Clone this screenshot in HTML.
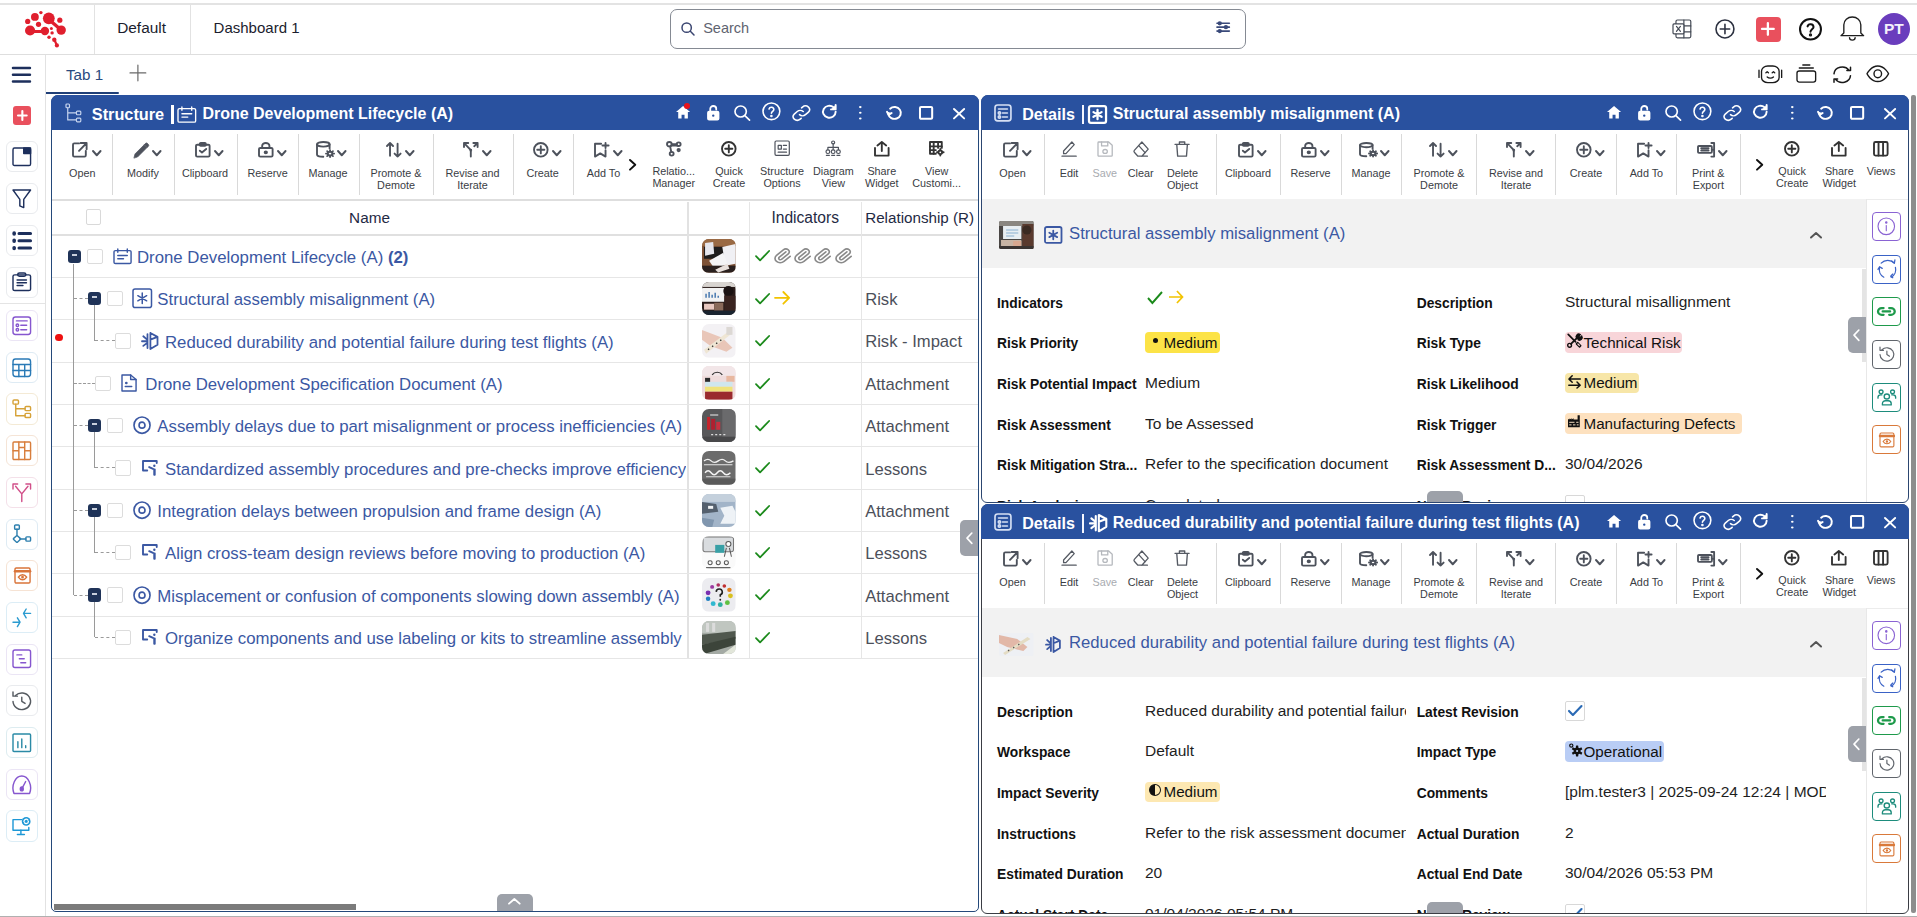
<!DOCTYPE html><html><head><meta charset="utf-8"><style>
html,body{margin:0;padding:0;background:#fff;width:1917px;height:917px;overflow:hidden;position:relative;font-family:"Liberation Sans", sans-serif;}
.t{position:absolute;white-space:nowrap;font-family:"Liberation Sans", sans-serif;}
.r{position:absolute;box-sizing:border-box;}
.ic{position:absolute;overflow:visible;}
.ic *{vector-effect:non-scaling-stroke;}
.clip{position:absolute;overflow:hidden;}
</style></head><body>
<div class="r" style="left:0.00px;top:3.00px;width:1917.00px;height:2.00px;background:#e3e3e3"></div>
<div class="r" style="left:0.00px;top:54.00px;width:1917.00px;height:1.00px;background:#dedede"></div>
<div class="r" style="left:94.00px;top:5.00px;width:1.00px;height:49.00px;background:#e2e2e2"></div>
<div class="r" style="left:190.00px;top:5.00px;width:1.00px;height:49.00px;background:#e2e2e2"></div>
<svg class="ic" style="left:0;top:0;width:80px;height:60px" viewBox="0 0 80 60"><g fill="#e01f2e" stroke="#e01f2e" stroke-linecap="round">
<circle cx="48.8" cy="18.3" r="5.9" stroke="none"/><circle cx="61.2" cy="30.1" r="4.7" stroke="none"/><path d="M49.5 20 L60 29" stroke-width="3.4"/>
<circle cx="59.8" cy="20.2" r="2.6" stroke="none"/><circle cx="34.9" cy="16.9" r="3.9" stroke="none"/><circle cx="27.7" cy="21.4" r="2.6" stroke="none"/>
<circle cx="40.9" cy="12.6" r="1.7" stroke="none"/><circle cx="38.5" cy="24.3" r="2.6" stroke="none"/>
<circle cx="30.1" cy="30.5" r="5.1" stroke="none"/><circle cx="44.9" cy="31" r="4.2" stroke="none"/><path d="M31 31.4 L44 31.4" stroke-width="3.0"/>
<circle cx="51.4" cy="28.4" r="1.5" stroke="none"/><circle cx="52.1" cy="32.9" r="1.7" stroke="none"/><circle cx="49" cy="37.3" r="1.7" stroke="none"/>
<circle cx="54.3" cy="39.7" r="2.2" stroke="none"/><circle cx="56.9" cy="45.4" r="2.1" stroke="none"/><path d="M54.5 40 L56.7 45" stroke-width="2.2"/>
</g></svg>
<div class="t" style="left:117.20px;top:20.16px;font-size:15.4px;line-height:15.4px;font-weight:400;color:#1b1d2e;">Default</div>
<div class="t" style="left:213.60px;top:19.80px;font-size:15.0px;line-height:15.0px;font-weight:400;color:#1b1d2e;">Dashboard 1</div>
<div class="r" style="left:670.00px;top:9.00px;width:576.00px;height:40.00px;border:1.5px solid #858a93;border-radius:7px"></div>
<svg class="ic" style="left:681.75px;top:22.75px;width:12.00px;height:12.00px;color:#3a4570;" viewBox="3.000 3.000 18.000 18.000" fill="none" stroke="currentColor" stroke-width="1.50" stroke-linecap="round" stroke-linejoin="round" preserveAspectRatio="none" ><circle cx="10" cy="10" r="7"/><path d="M15.5 15.5L21 21"/></svg>
<div class="t" style="left:703.20px;top:21.43px;font-size:14.5px;line-height:14.5px;font-weight:400;color:#5f6470;">Search</div>
<svg class="ic" style="left:1217.33px;top:22.32px;width:12.35px;height:10.35px;color:#3a4a7a;" viewBox="3.000 4.000 18.000 16.000" fill="none" stroke="currentColor" stroke-width="1.65" stroke-linecap="round" stroke-linejoin="round" preserveAspectRatio="none" ><path d="M3 6h18M3 12h18M3 18h18"/><circle cx="7" cy="6" r="2" fill="currentColor"/><circle cx="16" cy="12" r="2" fill="currentColor"/><circle cx="7" cy="18" r="2" fill="currentColor"/></svg>
<svg class="ic" style="left:1672.60px;top:20.10px;width:17.80px;height:17.80px;color:#444a55;" viewBox="3.000 3.000 18.000 18.000" fill="none" stroke="currentColor" stroke-width="1.20" stroke-linecap="round" stroke-linejoin="round" preserveAspectRatio="none" ><rect x="6" y="3" width="15" height="18" rx="1.5"/><path d="M14 3v18M14 9h7M14 15h7"/><rect x="3" y="7" width="11" height="10" rx="1" fill="#fff"/><path d="M6.5 9.5l4 5M10.5 9.5l-4 5"/></svg>
<svg class="ic" style="left:1716.29px;top:20.29px;width:17.93px;height:17.93px;color:#2c3140;" viewBox="2.500 2.500 19.000 19.000" fill="none" stroke="currentColor" stroke-width="1.58" stroke-linecap="round" stroke-linejoin="round" preserveAspectRatio="none" ><circle cx="12" cy="12" r="9.5"/><path d="M12 7v10M7 12h10"/></svg>
<div class="r" style="left:1756.00px;top:17.00px;width:24.50px;height:24.50px;background:#e9505d;border-radius:4px"></div>
<svg class="ic" style="left:1762.42px;top:23.43px;width:11.75px;height:11.75px;color:#fff;" viewBox="4.000 4.000 16.000 16.000" fill="none" stroke="currentColor" stroke-width="2.25" stroke-linecap="round" stroke-linejoin="round" preserveAspectRatio="none" ><path d="M12 4v16M4 12h16"/></svg>
<svg class="ic" style="left:1799.51px;top:18.51px;width:20.98px;height:20.48px;color:#111;" viewBox="2.000 2.000 20.000 20.000" fill="none" stroke="currentColor" stroke-width="2.03" stroke-linecap="round" stroke-linejoin="round" preserveAspectRatio="none" ><circle cx="12" cy="12" r="10"/><path d="M9.2 9.2a2.9 2.9 0 0 1 5.7.6c0 2-2.9 2.4-2.9 4.6"/><circle cx="12" cy="17.6" r="0.6" fill="currentColor"/></svg>
<svg class="ic" style="left:1840.67px;top:17.18px;width:22.65px;height:23.15px;color:#1e1e1e;" viewBox="4.000 4.500 16.000 18.000" fill="none" stroke="currentColor" stroke-width="1.35" stroke-linecap="round" stroke-linejoin="round" preserveAspectRatio="none" ><path d="M6 17V10.5a6 6 0 0 1 12 0V17l2 2H4z"/><path d="M10 20.5a2 2 0 0 0 4 0"/></svg>
<div class="r" style="left:1877.5px;top:12.8px;width:32px;height:32px;border-radius:50%;background:#6a3dbd"></div>
<div class="t" style="left:1743.80px;width:300px;text-align:center;top:21.08px;font-size:15.5px;line-height:15.5px;font-weight:700;color:#f4f0fb;">PT</div>
<div class="r" style="left:45.00px;top:55.00px;width:1.00px;height:862.00px;background:#e2e2e2"></div>
<svg class="ic" style="left:12.78px;top:68.28px;width:16.95px;height:13.45px;color:#1d2f5c;" viewBox="3.000 6.000 18.000 12.000" fill="none" stroke="currentColor" stroke-width="2.55" stroke-linecap="round" stroke-linejoin="round" preserveAspectRatio="none" ><path d="M3 6h18M3 12h18M3 18h18"/></svg>
<div class="r" style="left:12.80px;top:106.00px;width:18.60px;height:18.50px;background:#e9505d;border-radius:3px"></div>
<svg class="ic" style="left:17.85px;top:110.85px;width:8.70px;height:8.90px;color:#fff;" viewBox="4.000 4.000 16.000 16.000" fill="none" stroke="currentColor" stroke-width="2.10" stroke-linecap="round" stroke-linejoin="round" preserveAspectRatio="none" ><path d="M12 4v16M4 12h16"/></svg>
<div class="r" style="left:6.30px;top:141.00px;width:31.40px;height:31.20px;border:1px solid #e9ebee;border-radius:6px"></div>
<svg class="ic" style="left:13.41px;top:147.81px;width:17.57px;height:17.57px;color:#1d2f5c;" viewBox="3.000 4.000 18.000 16.000" fill="none" stroke="currentColor" stroke-width="1.42" stroke-linecap="round" stroke-linejoin="round" preserveAspectRatio="none" ><rect x="3" y="4" width="18" height="16" rx="1.5"/><rect x="14" y="4" width="7" height="5" fill="currentColor"/></svg>
<div class="r" style="left:6.30px;top:183.00px;width:31.40px;height:31.20px;border:1px solid #e9ebee;border-radius:6px"></div>
<svg class="ic" style="left:13.41px;top:189.81px;width:17.57px;height:17.57px;color:#1d2f5c;" viewBox="3.000 4.000 18.000 16.000" fill="none" stroke="currentColor" stroke-width="1.42" stroke-linecap="round" stroke-linejoin="round" preserveAspectRatio="none" ><path d="M3 4h18l-7 8.5V20l-4-1.5v-6z"/></svg>
<div class="r" style="left:6.30px;top:225.00px;width:31.40px;height:31.20px;border:1px solid #e9ebee;border-radius:6px"></div>
<svg class="ic" style="left:13.41px;top:231.81px;width:17.57px;height:17.57px;color:#1d2f5c;" viewBox="2.800 4.800 18.200 14.400" fill="none" stroke="currentColor" stroke-width="1.42" stroke-linecap="round" stroke-linejoin="round" preserveAspectRatio="none" ><path d="M9 6h12M9 12h12M9 18h12" stroke-width="3"/><circle cx="4" cy="6" r="1.2" fill="currentColor"/><circle cx="4" cy="12" r="1.2" fill="currentColor"/><circle cx="4" cy="18" r="1.2" fill="currentColor"/></svg>
<div class="r" style="left:6.30px;top:266.50px;width:31.40px;height:31.20px;border:1px solid #e9ebee;border-radius:6px"></div>
<svg class="ic" style="left:13.41px;top:273.31px;width:17.57px;height:17.57px;color:#1d2f5c;" viewBox="4.500 2.500 15.000 19.000" fill="none" stroke="currentColor" stroke-width="1.42" stroke-linecap="round" stroke-linejoin="round" preserveAspectRatio="none" ><rect x="4.5" y="4.5" width="15" height="17" rx="1.5"/><rect x="8.5" y="2.5" width="7" height="3.5" rx="1.5"/><path d="M8 10h8M8 13h8M8 16h5"/></svg>
<div class="r" style="left:6.30px;top:310.00px;width:31.40px;height:31.20px;border:1px solid #ebe5f5;border-radius:6px"></div>
<svg class="ic" style="left:13.41px;top:316.81px;width:17.57px;height:17.57px;color:#8656cf;" viewBox="3.000 3.000 18.000 18.000" fill="none" stroke="currentColor" stroke-width="1.42" stroke-linecap="round" stroke-linejoin="round" preserveAspectRatio="none" ><rect x="3" y="3" width="18" height="18" rx="2.5"/><path d="M6.5 7h11"/><circle cx="7.5" cy="11.5" r="1.3"/><circle cx="7.5" cy="16" r="1.3"/><path d="M11 11.5h6M11 16h6"/></svg>
<div class="r" style="left:6.30px;top:351.70px;width:31.40px;height:31.20px;border:1px solid #deebf4;border-radius:6px"></div>
<svg class="ic" style="left:13.41px;top:358.51px;width:17.57px;height:17.57px;color:#2a7ab6;" viewBox="3.000 4.000 18.000 16.000" fill="none" stroke="currentColor" stroke-width="1.42" stroke-linecap="round" stroke-linejoin="round" preserveAspectRatio="none" ><rect x="3" y="4" width="18" height="16" rx="2.5"/><path d="M3 9h18M3 14.5h18M9 9v11M15 9v11" /></svg>
<div class="r" style="left:6.30px;top:393.40px;width:31.40px;height:31.20px;border:1px solid #f4ead5;border-radius:6px"></div>
<svg class="ic" style="left:13.41px;top:400.21px;width:17.57px;height:17.57px;color:#d6a238;" viewBox="4.000 2.500 16.000 19.000" fill="none" stroke="currentColor" stroke-width="1.42" stroke-linecap="round" stroke-linejoin="round" preserveAspectRatio="none" ><rect x="4" y="2.5" width="5" height="4.5" rx="1"/><rect x="15" y="9.5" width="5" height="4.5" rx="1"/><rect x="15" y="17" width="5" height="4.5" rx="1"/><path d="M6.5 7V19.5H15M6.5 12H15"/></svg>
<div class="r" style="left:6.30px;top:435.10px;width:31.40px;height:31.20px;border:1px solid #f5e4d6;border-radius:6px"></div>
<svg class="ic" style="left:13.41px;top:441.91px;width:17.57px;height:17.57px;color:#d87e3c;" viewBox="3.000 4.000 18.000 16.000" fill="none" stroke="currentColor" stroke-width="1.42" stroke-linecap="round" stroke-linejoin="round" preserveAspectRatio="none" ><rect x="3" y="4" width="18" height="16" rx="1"/><path d="M9 4v16M15 4v16M3 12h6M15 12h6M9 9h6"/></svg>
<div class="r" style="left:6.30px;top:476.80px;width:31.40px;height:31.20px;border:1px solid #f4e0e9;border-radius:6px"></div>
<svg class="ic" style="left:13.41px;top:483.61px;width:17.57px;height:17.57px;color:#d14f89;" viewBox="3.500 5.000 17.000 16.000" fill="none" stroke="currentColor" stroke-width="1.42" stroke-linecap="round" stroke-linejoin="round" preserveAspectRatio="none" ><path d="M12 21V14L6 7M12 14l6-7M3.5 9.5V5h4.5M20.5 9.5V5H16"/></svg>
<div class="r" style="left:6.30px;top:518.50px;width:31.40px;height:31.20px;border:1px solid #deebf4;border-radius:6px"></div>
<svg class="ic" style="left:13.41px;top:525.31px;width:17.57px;height:17.57px;color:#2d7fae;" viewBox="2.257 2.500 18.743 20.743" fill="none" stroke="currentColor" stroke-width="1.42" stroke-linecap="round" stroke-linejoin="round" preserveAspectRatio="none" ><rect x="4" y="2.5" width="5" height="5" rx="1"/><rect x="16" y="16.5" width="5" height="5" rx="1"/><path d="M6.5 7.5v7.5M9.5 19h6.5"/><rect x="3.5" y="16" width="6" height="6" rx="1" transform="rotate(45 6.5 19)"/></svg>
<div class="r" style="left:6.30px;top:560.20px;width:31.40px;height:31.20px;border:1px solid #f6e3d4;border-radius:6px"></div>
<svg class="ic" style="left:14.66px;top:568.26px;width:15.07px;height:15.07px;color:#d9743a;" viewBox="3.000 3.000 18.000 18.000" fill="none" stroke="currentColor" stroke-width="1.42" stroke-linecap="round" stroke-linejoin="round" preserveAspectRatio="none" ><rect x="3" y="3" width="18" height="18" rx="1.5"/><path d="M3 7h18" stroke-width="2.5"/><path d="M7 14s2-3 5-3s5 3 5 3s-2 3-5 3s-5-3-5-3z"/><circle cx="12" cy="14" r="0.8" fill="currentColor"/></svg>
<div class="r" style="left:6.30px;top:601.90px;width:31.40px;height:31.20px;border:1px solid #dcedf6;border-radius:6px"></div>
<svg class="ic" style="left:13.41px;top:608.71px;width:17.57px;height:17.57px;color:#2b9bd0;" viewBox="2.000 6.000 20.000 12.000" fill="none" stroke="currentColor" stroke-width="1.42" stroke-linecap="round" stroke-linejoin="round" preserveAspectRatio="none" ><path d="M2 15h8M7 12l3 3l-3 3"/><path d="M22 9h-8M17 6l-3 3l3 3"/></svg>
<div class="r" style="left:6.30px;top:643.60px;width:31.40px;height:31.20px;border:1px solid #ebe5f5;border-radius:6px"></div>
<svg class="ic" style="left:13.41px;top:650.41px;width:17.57px;height:17.57px;color:#8656cf;" viewBox="3.000 3.000 18.000 18.000" fill="none" stroke="currentColor" stroke-width="1.42" stroke-linecap="round" stroke-linejoin="round" preserveAspectRatio="none" ><rect x="3" y="3" width="18" height="18" rx="2"/><path d="M7 8h5M9.5 12h5M11 16h5"/></svg>
<div class="r" style="left:6.30px;top:685.30px;width:31.40px;height:31.20px;border:1px solid #e9ebee;border-radius:6px"></div>
<svg class="ic" style="left:13.41px;top:692.11px;width:17.57px;height:17.57px;color:#555a60;" viewBox="4.000 3.000 16.000 16.914" fill="none" stroke="currentColor" stroke-width="1.42" stroke-linecap="round" stroke-linejoin="round" preserveAspectRatio="none" ><path d="M4 12a8 8 0 1 0 2.3-5.7"/><path d="M4 3v4h4M12 8v4l3 2"/></svg>
<div class="r" style="left:6.30px;top:727.00px;width:31.40px;height:31.20px;border:1px solid #ddecf0;border-radius:6px"></div>
<svg class="ic" style="left:13.41px;top:733.81px;width:17.57px;height:17.57px;color:#2a8aa6;" viewBox="3.000 3.000 18.000 18.000" fill="none" stroke="currentColor" stroke-width="1.42" stroke-linecap="round" stroke-linejoin="round" preserveAspectRatio="none" ><rect x="3" y="3" width="18" height="18" rx="1"/><path d="M8 17v-6M12 17V8M16 17v-2"/></svg>
<div class="r" style="left:6.30px;top:768.70px;width:31.40px;height:31.20px;border:1px solid #ebe5f5;border-radius:6px"></div>
<svg class="ic" style="left:13.41px;top:775.51px;width:17.57px;height:17.57px;color:#8656cf;" viewBox="3.000 6.377 18.000 13.123" fill="none" stroke="currentColor" stroke-width="1.42" stroke-linecap="round" stroke-linejoin="round" preserveAspectRatio="none" ><path d="M4 19.5a9 9 0 1 1 16 0z"/><path d="M12 16l4-5.5"/><circle cx="12" cy="16" r="1.5" fill="currentColor"/></svg>
<div class="r" style="left:6.30px;top:810.40px;width:31.40px;height:31.20px;border:1px solid #dcedf6;border-radius:6px"></div>
<svg class="ic" style="left:13.41px;top:817.21px;width:17.57px;height:17.57px;color:#1e98d6;" viewBox="3.000 1.000 20.000 20.000" fill="none" stroke="currentColor" stroke-width="1.42" stroke-linecap="round" stroke-linejoin="round" preserveAspectRatio="none" ><path d="M13 4H3v12h18v-3"/><path d="M8 21h8M12 16v5"/><circle cx="18" cy="6" r="5" fill="currentColor" stroke="none"/><path d="M15.5 6a2.5 2.5 0 0 1 4.5-1.5M20.5 6a2.5 2.5 0 0 1-4.5 1.5" stroke="#fff" stroke-width="1.3"/></svg>
<div class="r" style="left:0.00px;top:303.00px;width:45.00px;height:1.00px;background:#e4e4e4"></div>
<div class="t" style="left:66.00px;top:67.13px;font-size:15.2px;line-height:15.2px;font-weight:400;color:#2a4a80;">Tab 1</div>
<svg class="ic" style="left:130.10px;top:65.10px;width:15.80px;height:15.80px;color:#6a6a6a;" viewBox="4.000 4.000 16.000 16.000" fill="none" stroke="currentColor" stroke-width="1.20" stroke-linecap="round" stroke-linejoin="round" preserveAspectRatio="none" ><path d="M12 4v16M4 12h16"/></svg>
<div class="r" style="left:46.00px;top:92.00px;width:73.00px;height:2.00px;background:#1f3f78;border-radius:0 2px 2px 0"></div>
<svg class="ic" style="left:1759.17px;top:65.67px;width:22.65px;height:16.65px;color:#1a1a1a;" viewBox="3.000 4.000 18.000 16.000" fill="none" stroke="currentColor" stroke-width="1.35" stroke-linecap="round" stroke-linejoin="round" preserveAspectRatio="none" ><rect x="5" y="4" width="14" height="16" rx="5"/><path d="M3 8v7M21 8v7"/><path d="M8.5 10.5l1 -1l1 1M13.5 10.5l1 -1l1 1M9.5 14.5a3.5 3.5 0 0 0 5 0"/></svg>
<svg class="ic" style="left:1797.17px;top:65.17px;width:18.65px;height:17.15px;color:#1a1a1a;" viewBox="4.000 3.000 16.000 17.000" fill="none" stroke="currentColor" stroke-width="1.35" stroke-linecap="round" stroke-linejoin="round" preserveAspectRatio="none" ><rect x="4" y="9" width="16" height="11" rx="2"/><path d="M6 6h12M9 3h6"/></svg>
<svg class="ic" style="left:1833.75px;top:67.25px;width:16.50px;height:15.50px;color:#1a1a1a;" viewBox="4.000 3.629 16.000 16.742" fill="none" stroke="currentColor" stroke-width="1.50" stroke-linecap="round" stroke-linejoin="round" preserveAspectRatio="none" ><path d="M4 11A8 8 0 0 1 18.5 7M20 4v3.5h-3.5"/><path d="M20 13a8 8 0 0 1-14.5 4M4 20v-3.5h3.5"/></svg>
<svg class="ic" style="left:1867.21px;top:66.21px;width:21.57px;height:15.57px;color:#1a1a1a;" viewBox="2.000 5.000 20.000 14.000" fill="none" stroke="currentColor" stroke-width="1.42" stroke-linecap="round" stroke-linejoin="round" preserveAspectRatio="none" ><path d="M2 12s3.5-7 10-7s10 7 10 7s-3.5 7-10 7S2 12 2 12z"/><circle cx="12" cy="12" r="3.5"/></svg>
<div class="r" style="left:51px;top:95px;width:928px;height:817px;border:1px solid #24497a;border-radius:7px 7px 5px 5px;background:#fff"></div>
<div class="r" style="left:51px;top:95px;width:928px;height:35px;background:#29519f;border-radius:7px 7px 0 0"></div>
<svg class="ic" style="left:65.60px;top:104.10px;width:14.80px;height:17.80px;color:#c5d3ee;" viewBox="3.000 2.500 17.000 19.000" fill="none" stroke="currentColor" stroke-width="1.20" stroke-linecap="round" stroke-linejoin="round" preserveAspectRatio="none" ><rect x="3" y="2.5" width="4" height="4" rx="1"/><rect x="15" y="10" width="5" height="4" rx="1"/><rect x="15" y="17.5" width="5" height="4" rx="1"/><path d="M5 6.5V19.5h10M5 12h10"/></svg>
<div class="t" style="left:91.80px;top:106.10px;font-size:16.3px;line-height:16.3px;font-weight:700;color:#fff;">Structure</div>
<div class="r" style="left:170.60px;top:104.50px;width:3.00px;height:19.10px;background:#fff"></div>
<svg class="ic" style="left:178.18px;top:107.17px;width:17.65px;height:15.15px;color:#fff;" viewBox="3.000 3.000 18.000 18.000" fill="none" stroke="currentColor" stroke-width="1.35" stroke-linecap="round" stroke-linejoin="round" preserveAspectRatio="none" ><rect x="3" y="5" width="18" height="16" rx="1.5"/><path d="M7 3v4M17 3v4M7 11h10M7 15h6"/></svg>
<div class="t" style="left:202.40px;top:106.36px;font-size:16.0px;line-height:16.0px;font-weight:700;color:#fff;">Drone Development Lifecycle (A)</div>
<svg class="ic" style="left:675.90px;top:106.40px;width:14.10px;height:12.60px;color:#ffffff;" viewBox="2.500 3.000 19.000 17.500" fill="none" stroke="currentColor" stroke-width="0.00" stroke-linecap="round" stroke-linejoin="round" preserveAspectRatio="none" ><path d="M12 3L2.5 11.5H5.5V20.5H10V15H14V20.5H18.5V11.5H21.5Z" fill="currentColor" stroke="none"/></svg>
<svg class="ic" style="left:707.60px;top:105.90px;width:10.50px;height:13.60px;color:#ffffff;" viewBox="5.000 3.000 14.000 19.000" fill="none" stroke="currentColor" stroke-width="1.80" stroke-linecap="round" stroke-linejoin="round" preserveAspectRatio="none" ><path d="M8 11V7a4 4 0 0 1 8 0v1" /><rect x="5" y="11" width="14" height="11" rx="1.5" fill="currentColor"/><circle cx="12" cy="16.5" r="1.6" fill="#29519f" stroke="none"/></svg>
<svg class="ic" style="left:734.73px;top:105.62px;width:14.55px;height:14.15px;color:#ffffff;" viewBox="3.000 3.000 18.000 18.000" fill="none" stroke="currentColor" stroke-width="1.65" stroke-linecap="round" stroke-linejoin="round" preserveAspectRatio="none" ><circle cx="10" cy="10" r="7"/><path d="M15.5 15.5L21 21"/></svg>
<svg class="ic" style="left:762.59px;top:102.79px;width:16.83px;height:16.63px;color:#ffffff;" viewBox="2.000 2.000 20.000 20.000" fill="none" stroke="currentColor" stroke-width="1.58" stroke-linecap="round" stroke-linejoin="round" preserveAspectRatio="none" ><circle cx="12" cy="12" r="10"/><path d="M9.2 9.2a2.9 2.9 0 0 1 5.7.6c0 2-2.9 2.4-2.9 4.6"/><circle cx="12" cy="17.6" r="0.6" fill="currentColor"/></svg>
<svg class="ic" style="left:792.69px;top:105.99px;width:16.73px;height:14.22px;color:#ffffff;" viewBox="3.075 3.075 17.851 17.851" fill="none" stroke="currentColor" stroke-width="1.58" stroke-linecap="round" stroke-linejoin="round" preserveAspectRatio="none" ><path d="M10 14a4.5 4.5 0 0 0 6.4 0l3.2-3.2a4.5 4.5 0 0 0-6.4-6.4l-1 1"/><path d="M14 10a4.5 4.5 0 0 0-6.4 0l-3.2 3.2a4.5 4.5 0 0 0 6.4 6.4l1-1"/></svg>
<svg class="ic" style="left:822.68px;top:105.27px;width:12.65px;height:12.75px;color:#ffffff;" viewBox="4.500 3.500 15.000 15.990" fill="none" stroke="currentColor" stroke-width="1.95" stroke-linecap="round" stroke-linejoin="round" preserveAspectRatio="none" ><path d="M19.5 12a7.5 7.5 0 1 1-2.5-5.6"/><path d="M19.5 3.5v5.5h-5.5" fill="currentColor"/></svg>
<svg class="ic" style="left:859.30px;top:105.60px;width:2.60px;height:13.60px;color:#ffffff;" viewBox="10.700 3.700 2.600 16.600" fill="none" stroke="currentColor" stroke-width="0.00" stroke-linecap="round" stroke-linejoin="round" preserveAspectRatio="none" ><circle cx="12" cy="5" r="1.3" fill="currentColor"/><circle cx="12" cy="12" r="1.3" fill="currentColor"/><circle cx="12" cy="19" r="1.3" fill="currentColor"/></svg>
<svg class="ic" style="left:886.98px;top:106.97px;width:13.85px;height:11.85px;color:#ffffff;" viewBox="3.500 4.388 16.417 15.000" fill="none" stroke="currentColor" stroke-width="1.95" stroke-linecap="round" stroke-linejoin="round" preserveAspectRatio="none" ><path d="M5 13a7.5 7.5 0 1 0 2.2-6.5"/><path d="M3.5 10.5l2 4l3.5-2.5" fill="currentColor"/></svg>
<svg class="ic" style="left:919.91px;top:107.01px;width:12.18px;height:11.77px;color:#ffffff;" viewBox="4.000 4.000 16.000 16.000" fill="none" stroke="currentColor" stroke-width="2.03" stroke-linecap="round" stroke-linejoin="round" preserveAspectRatio="none" ><rect x="4" y="4" width="16" height="16" rx="1.5"/></svg>
<svg class="ic" style="left:954.08px;top:108.67px;width:10.15px;height:9.35px;color:#ffffff;" viewBox="5.000 5.000 14.000 14.000" fill="none" stroke="currentColor" stroke-width="1.95" stroke-linecap="round" stroke-linejoin="round" preserveAspectRatio="none" ><path d="M5 5l14 14M19 5L5 19"/></svg>
<div class="r" style="left:683.6px;top:102.7px;width:6.6px;height:6.6px;border-radius:50%;background:#e8141c"></div>
<svg class="ic" style="left:73.49px;top:143.19px;width:13.62px;height:13.62px;color:#4d525c;" viewBox="3.500 3.500 17.000 16.500" fill="none" stroke="currentColor" stroke-width="1.88" stroke-linecap="round" stroke-linejoin="round" preserveAspectRatio="none" ><path d="M11 4H5a1.5 1.5 0 0 0-1.5 1.5v13A1.5 1.5 0 0 0 5 20h13a1.5 1.5 0 0 0 1.5-1.5V13"/><path d="M13 3.5h7.5V11M20.5 3.5L11 13"/></svg>
<svg class="ic" style="left:92.52px;top:150.88px;width:7.55px;height:4.25px;color:#4d525c;" viewBox="6.000 9.000 12.000 6.000" fill="none" stroke="currentColor" stroke-width="1.95" stroke-linecap="round" stroke-linejoin="round" preserveAspectRatio="none" ><path d="M6 9l6 6l6-6"/></svg>
<div class="t" style="left:-67.70px;width:300px;text-align:center;top:167.96px;font-size:10.8px;line-height:10.8px;font-weight:400;color:#3a3d44;">Open</div>
<div class="r" style="left:112.40px;top:133.60px;width:1.00px;height:61.10px;background:#d9d9d9"></div>
<svg class="ic" style="left:133.62px;top:142.62px;width:14.75px;height:14.75px;color:#4d525c;" viewBox="4.000 2.671 17.329 17.329" fill="none" stroke="currentColor" stroke-width="0.75" stroke-linecap="round" stroke-linejoin="round" preserveAspectRatio="none" ><path d="M4 20l1.2-4.5L16 4.7l3.3 3.3L8.5 18.8z" fill="currentColor"/><path d="M16 4.7l1.6-1.6a1.5 1.5 0 0 1 2.1 0l1.2 1.2a1.5 1.5 0 0 1 0 2.1L19.3 8" fill="currentColor"/></svg>
<svg class="ic" style="left:153.22px;top:150.88px;width:7.55px;height:4.25px;color:#4d525c;" viewBox="6.000 9.000 12.000 6.000" fill="none" stroke="currentColor" stroke-width="1.95" stroke-linecap="round" stroke-linejoin="round" preserveAspectRatio="none" ><path d="M6 9l6 6l6-6"/></svg>
<div class="t" style="left:-7.00px;width:300px;text-align:center;top:167.96px;font-size:10.8px;line-height:10.8px;font-weight:400;color:#3a3d44;">Modify</div>
<div class="r" style="left:173.50px;top:133.60px;width:1.00px;height:61.10px;background:#d9d9d9"></div>
<svg class="ic" style="left:196.19px;top:143.19px;width:13.62px;height:13.62px;color:#4d525c;" viewBox="4.000 2.500 16.000 19.500" fill="none" stroke="currentColor" stroke-width="1.88" stroke-linecap="round" stroke-linejoin="round" preserveAspectRatio="none" ><rect x="4" y="5" width="16" height="17" rx="1.5"/><rect x="8.5" y="2.5" width="7" height="4" rx="1"/><path d="M8.5 13.5l2.5 2.5l5-5"/></svg>
<svg class="ic" style="left:215.22px;top:150.88px;width:7.55px;height:4.25px;color:#4d525c;" viewBox="6.000 9.000 12.000 6.000" fill="none" stroke="currentColor" stroke-width="1.95" stroke-linecap="round" stroke-linejoin="round" preserveAspectRatio="none" ><path d="M6 9l6 6l6-6"/></svg>
<div class="t" style="left:55.00px;width:300px;text-align:center;top:167.96px;font-size:10.8px;line-height:10.8px;font-weight:400;color:#3a3d44;">Clipboard</div>
<div class="r" style="left:236.80px;top:133.60px;width:1.00px;height:61.10px;background:#d9d9d9"></div>
<svg class="ic" style="left:258.79px;top:143.19px;width:13.62px;height:13.62px;color:#4d525c;" viewBox="4.500 3.000 15.000 19.000" fill="none" stroke="currentColor" stroke-width="1.88" stroke-linecap="round" stroke-linejoin="round" preserveAspectRatio="none" ><rect x="4.5" y="10" width="15" height="12" rx="1.5"/><path d="M8 10V7a4 4 0 0 1 8 0v3"/><circle cx="12" cy="16" r="1.3" fill="currentColor"/></svg>
<svg class="ic" style="left:277.83px;top:150.88px;width:7.55px;height:4.25px;color:#4d525c;" viewBox="6.000 9.000 12.000 6.000" fill="none" stroke="currentColor" stroke-width="1.95" stroke-linecap="round" stroke-linejoin="round" preserveAspectRatio="none" ><path d="M6 9l6 6l6-6"/></svg>
<div class="t" style="left:117.60px;width:300px;text-align:center;top:167.96px;font-size:10.8px;line-height:10.8px;font-weight:400;color:#3a3d44;">Reserve</div>
<div class="r" style="left:298.00px;top:133.60px;width:1.00px;height:61.10px;background:#d9d9d9"></div>
<svg class="ic" style="left:317.44px;top:142.44px;width:17.12px;height:15.12px;color:#4d525c;" viewBox="3.000 2.500 19.000 19.500" fill="none" stroke="currentColor" stroke-width="1.88" stroke-linecap="round" stroke-linejoin="round" preserveAspectRatio="none" ><ellipse cx="10" cy="5.5" rx="7" ry="3"/><path d="M3 5.5v13c0 1.7 3.1 3 7 3M17 5.5V11"/><circle cx="17.5" cy="17.5" r="2.5"/><path d="M17.5 13v1.5M17.5 20.5V22M13 17.5h1.5M20.5 17.5H22M14.3 14.3l1 1M19.7 19.7l1 1M14.3 20.7l1-1M19.7 15.3l1-1"/></svg>
<svg class="ic" style="left:338.23px;top:150.88px;width:7.55px;height:4.25px;color:#4d525c;" viewBox="6.000 9.000 12.000 6.000" fill="none" stroke="currentColor" stroke-width="1.95" stroke-linecap="round" stroke-linejoin="round" preserveAspectRatio="none" ><path d="M6 9l6 6l6-6"/></svg>
<div class="t" style="left:178.00px;width:300px;text-align:center;top:167.96px;font-size:10.8px;line-height:10.8px;font-weight:400;color:#3a3d44;">Manage</div>
<div class="r" style="left:359.00px;top:133.60px;width:1.00px;height:61.10px;background:#d9d9d9"></div>
<svg class="ic" style="left:387.19px;top:143.19px;width:13.62px;height:13.62px;color:#4d525c;" viewBox="3.000 3.000 18.000 18.000" fill="none" stroke="currentColor" stroke-width="1.88" stroke-linecap="round" stroke-linejoin="round" preserveAspectRatio="none" ><path d="M7 20V3M3 7l4-4l4 4"/><path d="M17 4v17M13 17l4 4l4-4"/></svg>
<svg class="ic" style="left:406.23px;top:150.88px;width:7.55px;height:4.25px;color:#4d525c;" viewBox="6.000 9.000 12.000 6.000" fill="none" stroke="currentColor" stroke-width="1.95" stroke-linecap="round" stroke-linejoin="round" preserveAspectRatio="none" ><path d="M6 9l6 6l6-6"/></svg>
<div class="t" style="left:246.00px;width:300px;text-align:center;top:167.96px;font-size:10.8px;line-height:10.8px;font-weight:400;color:#3a3d44;">Promote &amp;</div>
<div class="t" style="left:246.00px;width:300px;text-align:center;top:180.06px;font-size:10.8px;line-height:10.8px;font-weight:400;color:#3a3d44;">Demote</div>
<div class="r" style="left:432.80px;top:133.60px;width:1.00px;height:61.10px;background:#d9d9d9"></div>
<svg class="ic" style="left:463.69px;top:143.19px;width:13.62px;height:13.62px;color:#4d525c;" viewBox="4.000 4.000 16.000 17.000" fill="none" stroke="currentColor" stroke-width="1.88" stroke-linecap="round" stroke-linejoin="round" preserveAspectRatio="none" ><path d="M12 21V13L5 5"/><path d="M5 5h0M4 9V4h5" /><path d="M16 8l4-4M15 4h5v5"/><circle cx="12" cy="13" r="0.5"/></svg>
<svg class="ic" style="left:482.73px;top:150.88px;width:7.55px;height:4.25px;color:#4d525c;" viewBox="6.000 9.000 12.000 6.000" fill="none" stroke="currentColor" stroke-width="1.95" stroke-linecap="round" stroke-linejoin="round" preserveAspectRatio="none" ><path d="M6 9l6 6l6-6"/></svg>
<div class="t" style="left:322.50px;width:300px;text-align:center;top:167.96px;font-size:10.8px;line-height:10.8px;font-weight:400;color:#3a3d44;">Revise and</div>
<div class="t" style="left:322.50px;width:300px;text-align:center;top:180.06px;font-size:10.8px;line-height:10.8px;font-weight:400;color:#3a3d44;">Iterate</div>
<div class="r" style="left:512.60px;top:133.60px;width:1.00px;height:61.10px;background:#d9d9d9"></div>
<svg class="ic" style="left:533.89px;top:143.19px;width:13.62px;height:13.62px;color:#4d525c;" viewBox="2.500 2.500 19.000 19.000" fill="none" stroke="currentColor" stroke-width="1.88" stroke-linecap="round" stroke-linejoin="round" preserveAspectRatio="none" ><circle cx="12" cy="12" r="9.5"/><path d="M12 7v10M7 12h10"/></svg>
<svg class="ic" style="left:552.93px;top:150.88px;width:7.55px;height:4.25px;color:#4d525c;" viewBox="6.000 9.000 12.000 6.000" fill="none" stroke="currentColor" stroke-width="1.95" stroke-linecap="round" stroke-linejoin="round" preserveAspectRatio="none" ><path d="M6 9l6 6l6-6"/></svg>
<div class="t" style="left:392.70px;width:300px;text-align:center;top:167.96px;font-size:10.8px;line-height:10.8px;font-weight:400;color:#3a3d44;">Create</div>
<div class="r" style="left:573.20px;top:133.60px;width:1.00px;height:61.10px;background:#d9d9d9"></div>
<svg class="ic" style="left:594.69px;top:143.19px;width:13.62px;height:13.62px;color:#4d525c;" viewBox="6.000 2.000 15.500 19.000" fill="none" stroke="currentColor" stroke-width="1.88" stroke-linecap="round" stroke-linejoin="round" preserveAspectRatio="none" ><path d="M13 3H6v18l6-4.5l6 4.5V12"/><path d="M18 2v7M14.5 5.5h7"/></svg>
<svg class="ic" style="left:613.73px;top:150.88px;width:7.55px;height:4.25px;color:#4d525c;" viewBox="6.000 9.000 12.000 6.000" fill="none" stroke="currentColor" stroke-width="1.95" stroke-linecap="round" stroke-linejoin="round" preserveAspectRatio="none" ><path d="M6 9l6 6l6-6"/></svg>
<div class="t" style="left:453.50px;width:300px;text-align:center;top:167.96px;font-size:10.8px;line-height:10.8px;font-weight:400;color:#3a3d44;">Add To</div>
<svg class="ic" style="left:630.27px;top:160.17px;width:5.25px;height:9.65px;color:#111;" viewBox="9.000 4.000 8.000 16.000" fill="none" stroke="currentColor" stroke-width="1.95" stroke-linecap="round" stroke-linejoin="round" preserveAspectRatio="none" ><path d="M9 4l8 8l-8 8"/></svg>
<svg class="ic" style="left:666.89px;top:141.69px;width:13.62px;height:13.62px;color:#4d525c;" viewBox="3.000 3.000 17.500 18.500" fill="none" stroke="currentColor" stroke-width="1.88" stroke-linecap="round" stroke-linejoin="round" preserveAspectRatio="none" ><circle cx="6" cy="6" r="3"/><circle cx="18" cy="6" r="2.5"/><circle cx="9" cy="19" r="2.5"/><path d="M9 6h6.5M7 9l1.5 7.5M8 8l8 0"/><circle cx="18" cy="14" r="1.5"/></svg>
<div class="t" style="left:523.70px;width:300px;text-align:center;top:166.46px;font-size:10.8px;line-height:10.8px;font-weight:400;color:#3a3d44;">Relatio...</div>
<div class="t" style="left:523.70px;width:300px;text-align:center;top:178.26px;font-size:10.8px;line-height:10.8px;font-weight:400;color:#3a3d44;">Manager</div>
<svg class="ic" style="left:722.19px;top:141.69px;width:13.62px;height:13.62px;color:#333;" viewBox="2.500 2.500 19.000 19.000" fill="none" stroke="currentColor" stroke-width="1.88" stroke-linecap="round" stroke-linejoin="round" preserveAspectRatio="none" ><circle cx="12" cy="12" r="9.5"/><path d="M12 7v10M7 12h10"/></svg>
<div class="t" style="left:579.00px;width:300px;text-align:center;top:166.46px;font-size:10.8px;line-height:10.8px;font-weight:400;color:#3a3d44;">Quick</div>
<div class="t" style="left:579.00px;width:300px;text-align:center;top:178.26px;font-size:10.8px;line-height:10.8px;font-weight:400;color:#3a3d44;">Create</div>
<svg class="ic" style="left:774.85px;top:141.35px;width:14.30px;height:14.30px;color:#4d525c;" viewBox="3.000 4.000 18.000 16.000" fill="none" stroke="currentColor" stroke-width="1.20" stroke-linecap="round" stroke-linejoin="round" preserveAspectRatio="none" ><rect x="3" y="4" width="18" height="16" rx="1.5"/><path d="M7 9h4v4H7zM13.5 9h4M13.5 13h4M7 16.5h10.5"/></svg>
<div class="t" style="left:632.00px;width:300px;text-align:center;top:166.46px;font-size:10.8px;line-height:10.8px;font-weight:400;color:#3a3d44;">Structure</div>
<div class="t" style="left:632.00px;width:300px;text-align:center;top:178.26px;font-size:10.8px;line-height:10.8px;font-weight:400;color:#3a3d44;">Options</div>
<svg class="ic" style="left:826.25px;top:141.35px;width:14.30px;height:14.30px;color:#4d525c;" viewBox="2.500 2.000 19.000 20.000" fill="none" stroke="currentColor" stroke-width="1.20" stroke-linecap="round" stroke-linejoin="round" preserveAspectRatio="none" ><circle cx="12" cy="4" r="2"/><path d="M12 6v4M5 14v-3h14v3M12 10v4"/><circle cx="5" cy="17" r="2.5"/><circle cx="12" cy="17" r="2.5"/><circle cx="19" cy="17" r="2.5"/><path d="M3 22h4M10 22h4M17 22h4"/></svg>
<div class="t" style="left:683.40px;width:300px;text-align:center;top:166.46px;font-size:10.8px;line-height:10.8px;font-weight:400;color:#3a3d44;">Diagram</div>
<div class="t" style="left:683.40px;width:300px;text-align:center;top:178.26px;font-size:10.8px;line-height:10.8px;font-weight:400;color:#3a3d44;">View</div>
<svg class="ic" style="left:874.99px;top:141.69px;width:13.62px;height:13.62px;color:#333;" viewBox="5.000 3.000 14.000 18.000" fill="none" stroke="currentColor" stroke-width="1.88" stroke-linecap="round" stroke-linejoin="round" preserveAspectRatio="none" ><path d="M12 15V3M7.5 7.5L12 3l4.5 4.5"/><path d="M5 11v10h14V11"/></svg>
<div class="t" style="left:731.80px;width:300px;text-align:center;top:166.46px;font-size:10.8px;line-height:10.8px;font-weight:400;color:#3a3d44;">Share</div>
<div class="t" style="left:731.80px;width:300px;text-align:center;top:178.26px;font-size:10.8px;line-height:10.8px;font-weight:400;color:#3a3d44;">Widget</div>
<svg class="ic" style="left:929.79px;top:141.69px;width:13.62px;height:13.62px;color:#333;" viewBox="4.000 4.000 18.500 18.500" fill="none" stroke="currentColor" stroke-width="1.88" stroke-linecap="round" stroke-linejoin="round" preserveAspectRatio="none" ><path d="M12 20H4V4h16v8"/><path d="M4 10h16M4 15h8M9 4v16M15 4v8"/><circle cx="18" cy="18" r="2.5"/><path d="M18 13.5v1.5M18 21v1.5M13.5 18H15M21 18h1.5"/></svg>
<div class="t" style="left:786.60px;width:300px;text-align:center;top:166.46px;font-size:10.8px;line-height:10.8px;font-weight:400;color:#3a3d44;">View</div>
<div class="t" style="left:786.60px;width:300px;text-align:center;top:178.26px;font-size:10.8px;line-height:10.8px;font-weight:400;color:#3a3d44;">Customi...</div>
<div class="r" style="left:52.00px;top:199.00px;width:926.00px;height:2.00px;background:#dedede"></div>
<div class="r" style="left:86.40px;top:209.20px;width:14.60px;height:15.40px;border:1px solid #d9d9d9;border-radius:2px"></div>
<div class="t" style="left:219.50px;width:300px;text-align:center;top:210.05px;font-size:15.3px;line-height:15.3px;font-weight:400;color:#1f2a44;">Name</div>
<div class="t" style="left:771.40px;top:209.79px;font-size:15.6px;line-height:15.6px;font-weight:400;color:#1f2a44;">Indicators</div>
<div class="t" style="left:865.20px;top:210.13px;font-size:15.2px;line-height:15.2px;font-weight:400;color:#1f2a44;">Relationship (R)</div>
<div class="r" style="left:52.00px;top:233.50px;width:926.00px;height:2.00px;background:#e0e0e0"></div>
<div class="r" style="left:687.00px;top:201.50px;width:2.00px;height:457.50px;background:#e2e2e2"></div>
<div class="r" style="left:749.00px;top:201.50px;width:1.00px;height:457.50px;background:#e6e6e6"></div>
<div class="r" style="left:861.00px;top:201.50px;width:1.00px;height:457.50px;background:#e6e6e6"></div>
<div class="r" style="left:52.00px;top:276.86px;width:926.00px;height:1.00px;background:#e6e6e6"></div>
<div class="r" style="left:68.00px;top:249.58px;width:13.00px;height:13.20px;background:#1f3358;border-radius:3px"></div>
<div class="r" style="left:71.60px;top:253.88px;width:5.80px;height:1.80px;background:#c9d0dc"></div>
<div class="r" style="left:87.30px;top:248.58px;width:15.40px;height:15.40px;border:1px solid #dcdcdc;border-radius:2px"></div>
<svg class="ic" style="left:113.51px;top:248.89px;width:17.08px;height:14.57px;color:#3b58a3;" viewBox="3.000 3.000 18.000 18.000" fill="none" stroke="currentColor" stroke-width="1.42" stroke-linecap="round" stroke-linejoin="round" preserveAspectRatio="none" ><rect x="3" y="5" width="18" height="16" rx="1.5"/><path d="M7 3v4M17 3v4M7 11h10M7 15h6"/></svg>
<div class="clip" style="left:137px;top:235.0px;width:549px;height:42.36px">
<div class="t" style="left:0.00px;top:14.96px;font-size:16.8px;line-height:16.8px;font-weight:400;color:#3b58a3;">Drone Development Lifecycle (A) <b style="font-weight:700">(2)</b></div>
</div>
<div class="clip" style="left:702px;top:239.38px;width:33.5px;height:33.6px;border-radius:7px"><svg style="position:absolute;left:0;top:0;width:33.5px;height:33.6px" viewBox="0 0 33 34" preserveAspectRatio="none"><rect width="33" height="34" fill="#7e5236"/><rect x="0" y="0" width="33" height="7" fill="#9a6a44"/>
<rect x="2" y="8" width="20" height="12" fill="#1e1c1c"/><polygon points="3,4 11,3 12,15 3,17" fill="#e6e6ec"/>
<polygon points="20,8 33,5 33,25 23,27" fill="#f0f0f4"/><polygon points="7,22 21,14 25,25 13,31" fill="#f4f4f6"/>
<rect x="0" y="27" width="33" height="7" fill="#2a201e"/><polygon points="13,31 25,25 27,30 16,34" fill="#e8e0dc"/></svg></div>
<svg class="ic" style="left:755.50px;top:251.48px;width:13.10px;height:9.40px;color:#1b8a1b;" viewBox="4.000 6.500 16.000 11.000" fill="none" stroke="currentColor" stroke-width="1.80" stroke-linecap="round" stroke-linejoin="round" preserveAspectRatio="none" ><path d="M4 12.5l5 5L20 6.5"/></svg>
<svg class="ic" style="left:774.62px;top:249.31px;width:15.15px;height:13.65px;color:#8a8a8a;" viewBox="3.040 2.419 17.360 19.241" fill="none" stroke="currentColor" stroke-width="1.65" stroke-linecap="round" stroke-linejoin="round" preserveAspectRatio="none" ><path d="M15.5 6.5l-7.8 7.8a2 2 0 0 0 2.8 2.8l7.8-7.8a4 4 0 0 0-5.7-5.7l-7.8 7.8a6 6 0 0 0 8.5 8.5l7.1-7.1"/></svg>
<svg class="ic" style="left:794.92px;top:249.31px;width:15.15px;height:13.65px;color:#8a8a8a;" viewBox="3.040 2.419 17.360 19.241" fill="none" stroke="currentColor" stroke-width="1.65" stroke-linecap="round" stroke-linejoin="round" preserveAspectRatio="none" ><path d="M15.5 6.5l-7.8 7.8a2 2 0 0 0 2.8 2.8l7.8-7.8a4 4 0 0 0-5.7-5.7l-7.8 7.8a6 6 0 0 0 8.5 8.5l7.1-7.1"/></svg>
<svg class="ic" style="left:815.22px;top:249.31px;width:15.15px;height:13.65px;color:#8a8a8a;" viewBox="3.040 2.419 17.360 19.241" fill="none" stroke="currentColor" stroke-width="1.65" stroke-linecap="round" stroke-linejoin="round" preserveAspectRatio="none" ><path d="M15.5 6.5l-7.8 7.8a2 2 0 0 0 2.8 2.8l7.8-7.8a4 4 0 0 0-5.7-5.7l-7.8 7.8a6 6 0 0 0 8.5 8.5l7.1-7.1"/></svg>
<svg class="ic" style="left:835.52px;top:249.31px;width:15.15px;height:13.65px;color:#8a8a8a;" viewBox="3.040 2.419 17.360 19.241" fill="none" stroke="currentColor" stroke-width="1.65" stroke-linecap="round" stroke-linejoin="round" preserveAspectRatio="none" ><path d="M15.5 6.5l-7.8 7.8a2 2 0 0 0 2.8 2.8l7.8-7.8a4 4 0 0 0-5.7-5.7l-7.8 7.8a6 6 0 0 0 8.5 8.5l7.1-7.1"/></svg>
<div class="r" style="left:52.00px;top:319.22px;width:926.00px;height:1.00px;background:#e6e6e6"></div>
<div class="r" style="left:88.00px;top:291.94px;width:13.00px;height:13.20px;background:#1f3358;border-radius:3px"></div>
<div class="r" style="left:91.60px;top:296.24px;width:5.80px;height:1.80px;background:#c9d0dc"></div>
<div class="r" style="left:107.30px;top:290.94px;width:15.40px;height:15.40px;border:1px solid #dcdcdc;border-radius:2px"></div>
<div class="r" style="left:73.5px;top:298.04px;width:14.50px;height:0;border-top:1px dashed #9a9a9a"></div>
<svg class="ic" style="left:132.75px;top:289.29px;width:18.50px;height:18.50px;color:#3b58a3;" viewBox="3.000 3.000 18.000 18.000" fill="none" stroke="currentColor" stroke-width="1.50" stroke-linecap="round" stroke-linejoin="round" preserveAspectRatio="none" ><rect x="3" y="3" width="18" height="18" rx="2"/><path d="M12 7v10M7.7 9.5l8.6 5M16.3 9.5l-8.6 5"/></svg>
<div class="clip" style="left:157.3px;top:277.36px;width:528.7px;height:42.36px">
<div class="t" style="left:0.00px;top:14.96px;font-size:16.8px;line-height:16.8px;font-weight:400;color:#3b58a3;">Structural assembly misalignment (A)</div>
</div>
<div class="clip" style="left:702px;top:281.74px;width:33.5px;height:33.6px;border-radius:7px"><svg style="position:absolute;left:0;top:0;width:33.5px;height:33.6px" viewBox="0 0 33 34" preserveAspectRatio="none"><rect width="33" height="34" fill="#2a1c1a"/><rect x="0" y="0" width="33" height="5" fill="#d8d4d0"/>
<rect x="0" y="6" width="22" height="14" fill="#f2f2f2"/><path d="M4 16v-4M7 16v-6M10 16v-3M13 16v-5M16 16v-2" stroke="#4a7ab0" stroke-width="1.5"/>
<circle cx="26" cy="9" r="5" fill="#1a1212"/><rect x="22" y="14" width="11" height="16" fill="#3a2420"/>
<rect x="2" y="22" width="10" height="6" fill="#e8c8c0"/><rect x="12" y="21" width="9" height="8" fill="#8a6a5a"/><rect x="0" y="29" width="33" height="5" fill="#1a2430"/></svg></div>
<svg class="ic" style="left:755.50px;top:293.84px;width:13.10px;height:9.40px;color:#1b8a1b;" viewBox="4.000 6.500 16.000 11.000" fill="none" stroke="currentColor" stroke-width="1.80" stroke-linecap="round" stroke-linejoin="round" preserveAspectRatio="none" ><path d="M4 12.5l5 5L20 6.5"/></svg>
<svg class="ic" style="left:774.90px;top:292.44px;width:14.20px;height:11.70px;color:#f2c300;" viewBox="3.000 5.000 17.000 14.000" fill="none" stroke="currentColor" stroke-width="1.80" stroke-linecap="round" stroke-linejoin="round" preserveAspectRatio="none" ><path d="M3 12h17M13 5l7 7l-7 7"/></svg>
<div class="t" style="left:865.20px;top:292.09px;font-size:16.6px;line-height:16.6px;font-weight:400;color:#4c505a;">Risk</div>
<div class="r" style="left:52.00px;top:361.58px;width:926.00px;height:1.00px;background:#e6e6e6"></div>
<div class="r" style="left:115.40px;top:333.30px;width:15.40px;height:15.40px;border:1px solid #dcdcdc;border-radius:2px"></div>
<div class="r" style="left:94.5px;top:340.40px;width:20.90px;height:0;border-top:1px dashed #9a9a9a"></div>
<svg class="ic" style="left:142.40px;top:333.20px;width:15.50px;height:16.00px;color:#3b58a3;" viewBox="2.000 2.000 20.000 20.000" fill="none" stroke="currentColor" stroke-width="1.80" stroke-linecap="round" stroke-linejoin="round" preserveAspectRatio="none" ><path d="M3.67 6.08L8.25 9.96M2 12.29H8.25M3.67 18.12L8.25 14.62M9.08 3.36V20.83M12.83 2V22L22 16.56V6.85L12.83 2M12.83 10.35L22 6.85"/></svg>
<div class="clip" style="left:165px;top:319.72px;width:521px;height:42.36px">
<div class="t" style="left:0.00px;top:14.96px;font-size:16.8px;line-height:16.8px;font-weight:400;color:#3b58a3;">Reduced durability and potential failure during test flights (A)</div>
</div>
<div class="clip" style="left:702px;top:324.10px;width:33.5px;height:33.6px;border-radius:7px"><svg style="position:absolute;left:0;top:0;width:33.5px;height:33.6px" viewBox="0 0 33 34" preserveAspectRatio="none"><rect width="33" height="34" fill="#f3f1f4"/><polygon points="0,6 20,14 30,24 24,28 8,22 0,16" fill="#e9c6b8"/>
<polygon points="2,26 28,6 30,9 4,30" fill="#efe6d4"/><path d="M6 26l1-1M10 23l1-1M14 20l1-1M18 17l1-1" stroke="#333" stroke-width="1.3"/>
<rect x="24" y="3" width="6" height="8" fill="#dcd8d4"/></svg></div>
<svg class="ic" style="left:755.50px;top:336.20px;width:13.10px;height:9.40px;color:#1b8a1b;" viewBox="4.000 6.500 16.000 11.000" fill="none" stroke="currentColor" stroke-width="1.80" stroke-linecap="round" stroke-linejoin="round" preserveAspectRatio="none" ><path d="M4 12.5l5 5L20 6.5"/></svg>
<div class="t" style="left:865.20px;top:334.45px;font-size:16.6px;line-height:16.6px;font-weight:400;color:#4c505a;">Risk - Impact</div>
<div class="r" style="left:52.00px;top:403.94px;width:926.00px;height:1.00px;background:#e6e6e6"></div>
<div class="r" style="left:95.20px;top:375.66px;width:15.40px;height:15.40px;border:1px solid #dcdcdc;border-radius:2px"></div>
<div class="r" style="left:73.5px;top:382.76px;width:21.70px;height:0;border-top:1px dashed #9a9a9a"></div>
<svg class="ic" style="left:122.21px;top:375.17px;width:14.07px;height:15.98px;color:#3b58a3;" viewBox="6.000 3.000 13.000 18.000" fill="none" stroke="currentColor" stroke-width="1.42" stroke-linecap="round" stroke-linejoin="round" preserveAspectRatio="none" ><path d="M6 3h8l5 5v13H6z"/><path d="M14 3v5h5M9 16h6"/><circle cx="10" cy="12" r="0.6" fill="currentColor"/></svg>
<div class="clip" style="left:145.3px;top:362.08px;width:540.7px;height:42.36px">
<div class="t" style="left:0.00px;top:14.96px;font-size:16.8px;line-height:16.8px;font-weight:400;color:#3b58a3;">Drone Development Specification Document (A)</div>
</div>
<div class="clip" style="left:702px;top:366.46px;width:33.5px;height:33.6px;border-radius:7px"><svg style="position:absolute;left:0;top:0;width:33.5px;height:33.6px" viewBox="0 0 33 34" preserveAspectRatio="none"><rect width="33" height="34" fill="#efdcdc"/><rect x="0" y="0" width="33" height="10" fill="#f2e6e8"/>
<path d="M10 9a6 6 0 0 1 10 0" stroke="#333" stroke-width="1.2" fill="none"/><rect x="3" y="12" width="5" height="5" fill="#2a2a2a"/>
<rect x="24" y="10" width="8" height="6" fill="#e8b8a0"/>
<rect x="3" y="16" width="27" height="5" fill="#cfe6ee"/><rect x="3" y="21" width="27" height="5" fill="#f0e27a"/><rect x="3" y="26" width="27" height="8" fill="#9a2a2e"/></svg></div>
<svg class="ic" style="left:755.50px;top:378.56px;width:13.10px;height:9.40px;color:#1b8a1b;" viewBox="4.000 6.500 16.000 11.000" fill="none" stroke="currentColor" stroke-width="1.80" stroke-linecap="round" stroke-linejoin="round" preserveAspectRatio="none" ><path d="M4 12.5l5 5L20 6.5"/></svg>
<div class="t" style="left:865.20px;top:376.81px;font-size:16.6px;line-height:16.6px;font-weight:400;color:#4c505a;">Attachment</div>
<div class="r" style="left:52.00px;top:446.30px;width:926.00px;height:1.00px;background:#e6e6e6"></div>
<div class="r" style="left:88.00px;top:419.02px;width:13.00px;height:13.20px;background:#1f3358;border-radius:3px"></div>
<div class="r" style="left:91.60px;top:423.32px;width:5.80px;height:1.80px;background:#c9d0dc"></div>
<div class="r" style="left:107.30px;top:418.02px;width:15.40px;height:15.40px;border:1px solid #dcdcdc;border-radius:2px"></div>
<div class="r" style="left:73.5px;top:425.12px;width:14.50px;height:0;border-top:1px dashed #9a9a9a"></div>
<svg class="ic" style="left:134.12px;top:417.44px;width:16.05px;height:16.35px;color:#3b58a3;" viewBox="2.500 2.500 19.000 19.000" fill="none" stroke="currentColor" stroke-width="1.65" stroke-linecap="round" stroke-linejoin="round" preserveAspectRatio="none" ><circle cx="12" cy="12" r="9.5"/><circle cx="12" cy="12" r="3.5"/></svg>
<div class="clip" style="left:157.3px;top:404.44px;width:528.7px;height:42.36px">
<div class="t" style="left:0.00px;top:14.96px;font-size:16.8px;line-height:16.8px;font-weight:400;color:#3b58a3;">Assembly delays due to part misalignment or process inefficiencies (A)</div>
</div>
<div class="clip" style="left:702px;top:408.82px;width:33.5px;height:33.6px;border-radius:7px"><svg style="position:absolute;left:0;top:0;width:33.5px;height:33.6px" viewBox="0 0 33 34" preserveAspectRatio="none"><rect width="33" height="34" fill="#58585a"/><rect x="20" y="0" width="13" height="34" fill="#6a6a6c"/>
<rect x="5" y="8" width="3" height="13" fill="#c8242c"/><rect x="9" y="10" width="4" height="11" fill="#b02030"/><rect x="14" y="13" width="4" height="8" fill="#c83040"/>
<path d="M8 6h8" stroke="#eee" stroke-width="1"/><path d="M9 26h2M13 26h2M17 26h2M21 26h2" stroke="#ddd" stroke-width="1.2"/><rect x="0" y="28" width="33" height="6" fill="#48484a"/></svg></div>
<svg class="ic" style="left:755.50px;top:420.92px;width:13.10px;height:9.40px;color:#1b8a1b;" viewBox="4.000 6.500 16.000 11.000" fill="none" stroke="currentColor" stroke-width="1.80" stroke-linecap="round" stroke-linejoin="round" preserveAspectRatio="none" ><path d="M4 12.5l5 5L20 6.5"/></svg>
<div class="t" style="left:865.20px;top:419.17px;font-size:16.6px;line-height:16.6px;font-weight:400;color:#4c505a;">Attachment</div>
<div class="r" style="left:52.00px;top:488.66px;width:926.00px;height:1.00px;background:#e6e6e6"></div>
<div class="r" style="left:115.40px;top:460.38px;width:15.40px;height:15.40px;border:1px solid #dcdcdc;border-radius:2px"></div>
<div class="r" style="left:94.5px;top:467.48px;width:20.90px;height:0;border-top:1px dashed #9a9a9a"></div>
<svg class="ic" style="left:143.14px;top:460.72px;width:13.73px;height:14.82px;color:#3b58a3;" viewBox="3.050 3.180 18.350 18.020" fill="none" stroke="currentColor" stroke-width="1.88" stroke-linecap="round" stroke-linejoin="round" preserveAspectRatio="none" ><path d="M8.7 14.75H3.05V3.18H21.4V5.7"/><circle cx="18.2" cy="8.9" r="1.6" fill="currentColor" stroke="none"/><path d="M11.3 10.6L16.5 12.8"/><rect x="16.8" y="12.4" width="3.2" height="8.8" rx="1.2" fill="currentColor" stroke="none"/></svg>
<div class="clip" style="left:165px;top:446.8px;width:521px;height:42.36px">
<div class="t" style="left:0.00px;top:14.96px;font-size:16.8px;line-height:16.8px;font-weight:400;color:#3b58a3;">Standardized assembly procedures and pre-checks improve efficiency (A)</div>
</div>
<div class="clip" style="left:702px;top:451.18px;width:33.5px;height:33.6px;border-radius:7px"><svg style="position:absolute;left:0;top:0;width:33.5px;height:33.6px" viewBox="0 0 33 34" preserveAspectRatio="none"><rect width="33" height="34" fill="#6c6c6c"/><path d="M2 10q4-3 7 0t7 0t7 0t8 0" stroke="#f0f0f0" stroke-width="1.4" fill="none"/>
<path d="M2 14h28" stroke="#e8e8e8" stroke-width="1"/><path d="M3 22q3-4 6 0t6 0t6 0t7 0" stroke="#f4f4f4" stroke-width="1.4" fill="none"/>
<path d="M4 26h24" stroke="#dcdcdc" stroke-width="1"/><rect x="0" y="28" width="33" height="6" fill="#5a5a5a"/></svg></div>
<svg class="ic" style="left:755.50px;top:463.28px;width:13.10px;height:9.40px;color:#1b8a1b;" viewBox="4.000 6.500 16.000 11.000" fill="none" stroke="currentColor" stroke-width="1.80" stroke-linecap="round" stroke-linejoin="round" preserveAspectRatio="none" ><path d="M4 12.5l5 5L20 6.5"/></svg>
<div class="t" style="left:865.20px;top:461.53px;font-size:16.6px;line-height:16.6px;font-weight:400;color:#4c505a;">Lessons</div>
<div class="r" style="left:52.00px;top:531.02px;width:926.00px;height:1.00px;background:#e6e6e6"></div>
<div class="r" style="left:88.00px;top:503.74px;width:13.00px;height:13.20px;background:#1f3358;border-radius:3px"></div>
<div class="r" style="left:91.60px;top:508.04px;width:5.80px;height:1.80px;background:#c9d0dc"></div>
<div class="r" style="left:107.30px;top:502.74px;width:15.40px;height:15.40px;border:1px solid #dcdcdc;border-radius:2px"></div>
<div class="r" style="left:73.5px;top:509.84px;width:14.50px;height:0;border-top:1px dashed #9a9a9a"></div>
<svg class="ic" style="left:134.12px;top:502.16px;width:16.05px;height:16.35px;color:#3b58a3;" viewBox="2.500 2.500 19.000 19.000" fill="none" stroke="currentColor" stroke-width="1.65" stroke-linecap="round" stroke-linejoin="round" preserveAspectRatio="none" ><circle cx="12" cy="12" r="9.5"/><circle cx="12" cy="12" r="3.5"/></svg>
<div class="clip" style="left:157.3px;top:489.15999999999997px;width:528.7px;height:42.36px">
<div class="t" style="left:0.00px;top:14.96px;font-size:16.8px;line-height:16.8px;font-weight:400;color:#3b58a3;">Integration delays between propulsion and frame design (A)</div>
</div>
<div class="clip" style="left:702px;top:493.54px;width:33.5px;height:33.6px;border-radius:7px"><svg style="position:absolute;left:0;top:0;width:33.5px;height:33.6px" viewBox="0 0 33 34" preserveAspectRatio="none"><rect width="33" height="34" fill="#a2b4c8"/><rect x="0" y="0" width="33" height="8" fill="#c4d0dc"/>
<polygon points="0,8 14,10 16,18 0,20" fill="#54606e"/><rect x="6" y="12" width="5" height="3" fill="#f2f4f6"/>
<polygon points="18,14 30,12 33,18 33,30 18,30 22,22" fill="#eef2f6"/><polygon points="0,24 12,26 10,34 0,34" fill="#8096ae"/></svg></div>
<svg class="ic" style="left:755.50px;top:505.64px;width:13.10px;height:9.40px;color:#1b8a1b;" viewBox="4.000 6.500 16.000 11.000" fill="none" stroke="currentColor" stroke-width="1.80" stroke-linecap="round" stroke-linejoin="round" preserveAspectRatio="none" ><path d="M4 12.5l5 5L20 6.5"/></svg>
<div class="t" style="left:865.20px;top:503.89px;font-size:16.6px;line-height:16.6px;font-weight:400;color:#4c505a;">Attachment</div>
<div class="r" style="left:52.00px;top:573.38px;width:926.00px;height:1.00px;background:#e6e6e6"></div>
<div class="r" style="left:115.40px;top:545.10px;width:15.40px;height:15.40px;border:1px solid #dcdcdc;border-radius:2px"></div>
<div class="r" style="left:94.5px;top:552.20px;width:20.90px;height:0;border-top:1px dashed #9a9a9a"></div>
<svg class="ic" style="left:143.14px;top:545.44px;width:13.73px;height:14.83px;color:#3b58a3;" viewBox="3.050 3.180 18.350 18.020" fill="none" stroke="currentColor" stroke-width="1.88" stroke-linecap="round" stroke-linejoin="round" preserveAspectRatio="none" ><path d="M8.7 14.75H3.05V3.18H21.4V5.7"/><circle cx="18.2" cy="8.9" r="1.6" fill="currentColor" stroke="none"/><path d="M11.3 10.6L16.5 12.8"/><rect x="16.8" y="12.4" width="3.2" height="8.8" rx="1.2" fill="currentColor" stroke="none"/></svg>
<div class="clip" style="left:165px;top:531.52px;width:521px;height:42.36px">
<div class="t" style="left:0.00px;top:14.96px;font-size:16.8px;line-height:16.8px;font-weight:400;color:#3b58a3;">Align cross-team design reviews before moving to production (A)</div>
</div>
<div class="clip" style="left:702px;top:535.90px;width:33.5px;height:33.6px;border-radius:7px"><svg style="position:absolute;left:0;top:0;width:33.5px;height:33.6px" viewBox="0 0 33 34" preserveAspectRatio="none"><rect width="33" height="34" fill="#fafafa"/><rect x="1" y="1" width="30" height="15" rx="2" fill="#d9dcdf" stroke="#777" stroke-width="1"/>
<rect x="13" y="9" width="9" height="8" fill="#38a0a6"/><circle cx="26" cy="8" r="2.5" fill="#fff" stroke="#555" stroke-width="1"/>
<path d="M24 12l-2 9M27 12l2 9" stroke="#555" stroke-width="1"/><circle cx="8" cy="27" r="2" fill="none" stroke="#555"/><circle cx="16" cy="27" r="2" fill="none" stroke="#555"/><circle cx="24" cy="27" r="2" fill="none" stroke="#555"/>
<path d="M4 32h24" stroke="#666" stroke-width="1.2"/></svg></div>
<svg class="ic" style="left:755.50px;top:548.00px;width:13.10px;height:9.40px;color:#1b8a1b;" viewBox="4.000 6.500 16.000 11.000" fill="none" stroke="currentColor" stroke-width="1.80" stroke-linecap="round" stroke-linejoin="round" preserveAspectRatio="none" ><path d="M4 12.5l5 5L20 6.5"/></svg>
<div class="t" style="left:865.20px;top:546.25px;font-size:16.6px;line-height:16.6px;font-weight:400;color:#4c505a;">Lessons</div>
<div class="r" style="left:52.00px;top:615.74px;width:926.00px;height:1.00px;background:#e6e6e6"></div>
<div class="r" style="left:88.00px;top:588.46px;width:13.00px;height:13.20px;background:#1f3358;border-radius:3px"></div>
<div class="r" style="left:91.60px;top:592.76px;width:5.80px;height:1.80px;background:#c9d0dc"></div>
<div class="r" style="left:107.30px;top:587.46px;width:15.40px;height:15.40px;border:1px solid #dcdcdc;border-radius:2px"></div>
<div class="r" style="left:73.5px;top:594.56px;width:14.50px;height:0;border-top:1px dashed #9a9a9a"></div>
<svg class="ic" style="left:134.12px;top:586.88px;width:16.05px;height:16.35px;color:#3b58a3;" viewBox="2.500 2.500 19.000 19.000" fill="none" stroke="currentColor" stroke-width="1.65" stroke-linecap="round" stroke-linejoin="round" preserveAspectRatio="none" ><circle cx="12" cy="12" r="9.5"/><circle cx="12" cy="12" r="3.5"/></svg>
<div class="clip" style="left:157.3px;top:573.88px;width:528.7px;height:42.36px">
<div class="t" style="left:0.00px;top:14.96px;font-size:16.8px;line-height:16.8px;font-weight:400;color:#3b58a3;">Misplacement or confusion of components slowing down assembly (A)</div>
</div>
<div class="clip" style="left:702px;top:578.26px;width:33.5px;height:33.6px;border-radius:7px"><svg style="position:absolute;left:0;top:0;width:33.5px;height:33.6px" viewBox="0 0 33 34" preserveAspectRatio="none"><rect width="33" height="34" fill="#ececf0"/><circle cx="6" cy="15" r="2.4" fill="#7a2fb0"/><circle cx="10" cy="9" r="2" fill="#9a3aa0"/><circle cx="16" cy="7" r="1.8" fill="#b03060"/>
<circle cx="22" cy="8" r="1.8" fill="#c03030"/><circle cx="27" cy="12" r="2.2" fill="#e08020"/><circle cx="28" cy="18" r="2.4" fill="#d8c020"/><circle cx="25" cy="25" r="2.4" fill="#60c040"/>
<circle cx="18" cy="27" r="2.4" fill="#30b0a0"/><circle cx="11" cy="26" r="2.4" fill="#30b8d0"/><circle cx="6" cy="21" r="2.2" fill="#2080c0"/>
<path d="M14 14a3 3 0 1 1 4 3v2" stroke="#222" stroke-width="1.6" fill="none"/><circle cx="18" cy="22" r="0.9" fill="#222"/></svg></div>
<svg class="ic" style="left:755.50px;top:590.36px;width:13.10px;height:9.40px;color:#1b8a1b;" viewBox="4.000 6.500 16.000 11.000" fill="none" stroke="currentColor" stroke-width="1.80" stroke-linecap="round" stroke-linejoin="round" preserveAspectRatio="none" ><path d="M4 12.5l5 5L20 6.5"/></svg>
<div class="t" style="left:865.20px;top:588.61px;font-size:16.6px;line-height:16.6px;font-weight:400;color:#4c505a;">Attachment</div>
<div class="r" style="left:52.00px;top:658.10px;width:926.00px;height:1.00px;background:#e6e6e6"></div>
<div class="r" style="left:115.40px;top:629.82px;width:15.40px;height:15.40px;border:1px solid #dcdcdc;border-radius:2px"></div>
<div class="r" style="left:94.5px;top:636.92px;width:20.90px;height:0;border-top:1px dashed #9a9a9a"></div>
<svg class="ic" style="left:143.14px;top:630.16px;width:13.73px;height:14.83px;color:#3b58a3;" viewBox="3.050 3.180 18.350 18.020" fill="none" stroke="currentColor" stroke-width="1.88" stroke-linecap="round" stroke-linejoin="round" preserveAspectRatio="none" ><path d="M8.7 14.75H3.05V3.18H21.4V5.7"/><circle cx="18.2" cy="8.9" r="1.6" fill="currentColor" stroke="none"/><path d="M11.3 10.6L16.5 12.8"/><rect x="16.8" y="12.4" width="3.2" height="8.8" rx="1.2" fill="currentColor" stroke="none"/></svg>
<div class="clip" style="left:165px;top:616.24px;width:521px;height:42.36px">
<div class="t" style="left:0.00px;top:14.96px;font-size:16.8px;line-height:16.8px;font-weight:400;color:#3b58a3;">Organize components and use labeling or kits to streamline assembly (A)</div>
</div>
<div class="clip" style="left:702px;top:620.62px;width:33.5px;height:33.6px;border-radius:7px"><svg style="position:absolute;left:0;top:0;width:33.5px;height:33.6px" viewBox="0 0 33 34" preserveAspectRatio="none"><rect width="33" height="34" fill="#a4aaa4"/><rect x="0" y="0" width="33" height="12" fill="#c0c6c0"/>
<polygon points="0,14 33,10 33,18 0,24" fill="#50584e"/><polygon points="0,24 33,16 33,24 0,34" fill="#3c443a"/>
<polygon points="20,34 33,24 33,34" fill="#e2e6da"/><rect x="4" y="2" width="3" height="9" fill="#dcdcdc"/><rect x="10" y="2" width="3" height="9" fill="#dcdcdc"/></svg></div>
<svg class="ic" style="left:755.50px;top:632.72px;width:13.10px;height:9.40px;color:#1b8a1b;" viewBox="4.000 6.500 16.000 11.000" fill="none" stroke="currentColor" stroke-width="1.80" stroke-linecap="round" stroke-linejoin="round" preserveAspectRatio="none" ><path d="M4 12.5l5 5L20 6.5"/></svg>
<div class="t" style="left:865.20px;top:630.97px;font-size:16.6px;line-height:16.6px;font-weight:400;color:#4c505a;">Lessons</div>
<div class="r" style="left:73.00px;top:263.70px;width:1.00px;height:331.36px;background:#9a9a9a"></div>
<div class="r" style="left:94.00px;top:305.14px;width:1.00px;height:35.76px;background:#9a9a9a"></div>
<div class="r" style="left:94.00px;top:432.22px;width:1.00px;height:35.76px;background:#9a9a9a"></div>
<div class="r" style="left:94.00px;top:516.94px;width:1.00px;height:35.76px;background:#9a9a9a"></div>
<div class="r" style="left:94.00px;top:601.66px;width:1.00px;height:35.76px;background:#9a9a9a"></div>
<div class="r" style="left:55.3px;top:333.8px;width:7.4px;height:7.4px;border-radius:50%;background:#ee1111"></div>
<div class="r" style="left:54.00px;top:904.00px;width:302.00px;height:5.50px;background:#7b7b7b"></div>
<div class="r" style="left:497.00px;top:894.00px;width:35.50px;height:17.00px;background:#9da1a9;border-radius:5px 5px 0 0"></div>
<svg class="ic" style="left:509.40px;top:899.40px;width:10.70px;height:4.70px;color:#fff;" viewBox="5.000 8.000 14.000 7.000" fill="none" stroke="currentColor" stroke-width="1.80" stroke-linecap="round" stroke-linejoin="round" preserveAspectRatio="none" ><path d="M5 15l7-7l7 7"/></svg>
<div class="r" style="left:960.00px;top:520.40px;width:18.00px;height:35.40px;background:#9da1a9;border-radius:5px 0 0 5px"></div>
<svg class="ic" style="left:966.83px;top:532.83px;width:4.85px;height:10.35px;color:#fff;" viewBox="8.000 5.000 7.000 14.000" fill="none" stroke="currentColor" stroke-width="1.65" stroke-linecap="round" stroke-linejoin="round" preserveAspectRatio="none" ><path d="M15 5l-7 7l7 7"/></svg>
<div class="r" style="left:981px;top:95px;width:928px;height:407.5px;border:1px solid #2c4670;border-radius:7px 7px 6px 6px;background:#fff;overflow:hidden"></div>
<div class="r" style="left:981px;top:95px;width:928px;height:35px;background:#29519f;border-radius:7px 7px 0 0"></div>
<svg class="ic" style="left:994.53px;top:105.23px;width:15.95px;height:15.95px;color:#d6e0f4;" viewBox="3.000 3.000 18.000 18.000" fill="none" stroke="currentColor" stroke-width="1.65" stroke-linecap="round" stroke-linejoin="round" preserveAspectRatio="none" ><rect x="3" y="3" width="18" height="18" rx="3"/><path d="M7 7.5h10"/><circle cx="8" cy="12" r="1.3"/><circle cx="8" cy="16.5" r="1.3"/><path d="M11.5 12h5.5M11.5 16.5h5.5"/></svg>
<div class="t" style="left:1022.20px;top:106.27px;font-size:16.1px;line-height:16.1px;font-weight:700;color:#fff;">Details</div>
<div class="r" style="left:1081.50px;top:104.50px;width:2.60px;height:19.10px;background:#f4f6ff"></div>
<svg class="ic" style="left:1089.42px;top:106.22px;width:17.05px;height:16.95px;color:#fff;" viewBox="3.000 3.000 18.000 18.000" fill="none" stroke="currentColor" stroke-width="2.25" stroke-linecap="round" stroke-linejoin="round" preserveAspectRatio="none" ><rect x="3" y="3" width="18" height="18" rx="2"/><path d="M12 7v10M7.7 9.5l8.6 5M16.3 9.5l-8.6 5"/></svg>
<div class="t" style="left:1112.80px;top:106.36px;font-size:16.0px;line-height:16.0px;font-weight:700;color:#fff;">Structural assembly misalignment (A)</div>
<svg class="ic" style="left:1607.10px;top:106.40px;width:14.10px;height:12.60px;color:#ffffff;" viewBox="2.500 3.000 19.000 17.500" fill="none" stroke="currentColor" stroke-width="0.00" stroke-linecap="round" stroke-linejoin="round" preserveAspectRatio="none" ><path d="M12 3L2.5 11.5H5.5V20.5H10V15H14V20.5H18.5V11.5H21.5Z" fill="currentColor" stroke="none"/></svg>
<svg class="ic" style="left:1638.80px;top:105.90px;width:10.50px;height:13.60px;color:#ffffff;" viewBox="5.000 3.000 14.000 19.000" fill="none" stroke="currentColor" stroke-width="1.80" stroke-linecap="round" stroke-linejoin="round" preserveAspectRatio="none" ><path d="M8 11V7a4 4 0 0 1 8 0v1" /><rect x="5" y="11" width="14" height="11" rx="1.5" fill="currentColor"/><circle cx="12" cy="16.5" r="1.6" fill="#29519f" stroke="none"/></svg>
<svg class="ic" style="left:1665.92px;top:105.62px;width:14.55px;height:14.15px;color:#ffffff;" viewBox="3.000 3.000 18.000 18.000" fill="none" stroke="currentColor" stroke-width="1.65" stroke-linecap="round" stroke-linejoin="round" preserveAspectRatio="none" ><circle cx="10" cy="10" r="7"/><path d="M15.5 15.5L21 21"/></svg>
<svg class="ic" style="left:1693.79px;top:102.79px;width:16.83px;height:16.63px;color:#ffffff;" viewBox="2.000 2.000 20.000 20.000" fill="none" stroke="currentColor" stroke-width="1.58" stroke-linecap="round" stroke-linejoin="round" preserveAspectRatio="none" ><circle cx="12" cy="12" r="10"/><path d="M9.2 9.2a2.9 2.9 0 0 1 5.7.6c0 2-2.9 2.4-2.9 4.6"/><circle cx="12" cy="17.6" r="0.6" fill="currentColor"/></svg>
<svg class="ic" style="left:1723.89px;top:105.99px;width:16.73px;height:14.22px;color:#ffffff;" viewBox="3.075 3.075 17.851 17.851" fill="none" stroke="currentColor" stroke-width="1.58" stroke-linecap="round" stroke-linejoin="round" preserveAspectRatio="none" ><path d="M10 14a4.5 4.5 0 0 0 6.4 0l3.2-3.2a4.5 4.5 0 0 0-6.4-6.4l-1 1"/><path d="M14 10a4.5 4.5 0 0 0-6.4 0l-3.2 3.2a4.5 4.5 0 0 0 6.4 6.4l1-1"/></svg>
<svg class="ic" style="left:1753.88px;top:105.27px;width:12.65px;height:12.75px;color:#ffffff;" viewBox="4.500 3.500 15.000 15.990" fill="none" stroke="currentColor" stroke-width="1.95" stroke-linecap="round" stroke-linejoin="round" preserveAspectRatio="none" ><path d="M19.5 12a7.5 7.5 0 1 1-2.5-5.6"/><path d="M19.5 3.5v5.5h-5.5" fill="currentColor"/></svg>
<svg class="ic" style="left:1790.50px;top:105.60px;width:2.60px;height:13.60px;color:#ffffff;" viewBox="10.700 3.700 2.600 16.600" fill="none" stroke="currentColor" stroke-width="0.00" stroke-linecap="round" stroke-linejoin="round" preserveAspectRatio="none" ><circle cx="12" cy="5" r="1.3" fill="currentColor"/><circle cx="12" cy="12" r="1.3" fill="currentColor"/><circle cx="12" cy="19" r="1.3" fill="currentColor"/></svg>
<svg class="ic" style="left:1818.17px;top:106.97px;width:13.85px;height:11.85px;color:#ffffff;" viewBox="3.500 4.388 16.417 15.000" fill="none" stroke="currentColor" stroke-width="1.95" stroke-linecap="round" stroke-linejoin="round" preserveAspectRatio="none" ><path d="M5 13a7.5 7.5 0 1 0 2.2-6.5"/><path d="M3.5 10.5l2 4l3.5-2.5" fill="currentColor"/></svg>
<svg class="ic" style="left:1851.11px;top:107.01px;width:12.18px;height:11.77px;color:#ffffff;" viewBox="4.000 4.000 16.000 16.000" fill="none" stroke="currentColor" stroke-width="2.03" stroke-linecap="round" stroke-linejoin="round" preserveAspectRatio="none" ><rect x="4" y="4" width="16" height="16" rx="1.5"/></svg>
<svg class="ic" style="left:1885.28px;top:108.67px;width:10.15px;height:9.35px;color:#ffffff;" viewBox="5.000 5.000 14.000 14.000" fill="none" stroke="currentColor" stroke-width="1.95" stroke-linecap="round" stroke-linejoin="round" preserveAspectRatio="none" ><path d="M5 5l14 14M19 5L5 19"/></svg>
<svg class="ic" style="left:1003.69px;top:143.19px;width:13.62px;height:13.62px;color:#4d525c;" viewBox="3.500 3.500 17.000 16.500" fill="none" stroke="currentColor" stroke-width="1.88" stroke-linecap="round" stroke-linejoin="round" preserveAspectRatio="none" ><path d="M11 4H5a1.5 1.5 0 0 0-1.5 1.5v13A1.5 1.5 0 0 0 5 20h13a1.5 1.5 0 0 0 1.5-1.5V13"/><path d="M13 3.5h7.5V11M20.5 3.5L11 13"/></svg>
<svg class="ic" style="left:1022.73px;top:150.88px;width:7.55px;height:4.25px;color:#4d525c;" viewBox="6.000 9.000 12.000 6.000" fill="none" stroke="currentColor" stroke-width="1.95" stroke-linecap="round" stroke-linejoin="round" preserveAspectRatio="none" ><path d="M6 9l6 6l6-6"/></svg>
<div class="t" style="left:862.50px;width:300px;text-align:center;top:167.96px;font-size:10.8px;line-height:10.8px;font-weight:400;color:#3a3d44;">Open</div>
<div class="r" style="left:1043.50px;top:133.60px;width:1.00px;height:61.10px;background:#d9d9d9"></div>
<svg class="ic" style="left:1061.89px;top:142.39px;width:14.22px;height:14.22px;color:#555a63;" viewBox="3.000 6.000 18.000 16.500" fill="none" stroke="currentColor" stroke-width="1.27" stroke-linecap="round" stroke-linejoin="round" preserveAspectRatio="none" ><path d="M5 16.5L15.5 6l3 3L8 19.5H5z"/><path d="M3 22.5h18"/></svg>
<div class="t" style="left:919.00px;width:300px;text-align:center;top:167.96px;font-size:10.8px;line-height:10.8px;font-weight:400;color:#3a3d44;">Edit</div>
<svg class="ic" style="left:1097.69px;top:142.39px;width:14.22px;height:14.22px;color:#b5b8bd;" viewBox="4.000 3.000 16.000 18.000" fill="none" stroke="currentColor" stroke-width="1.27" stroke-linecap="round" stroke-linejoin="round" preserveAspectRatio="none" ><path d="M5 3h11l4 4v13a1 1 0 0 1-1 1H5a1 1 0 0 1-1-1V4a1 1 0 0 1 1-1z"/><path d="M8 3v5h7V3"/><circle cx="12" cy="15" r="2.5"/></svg>
<div class="t" style="left:954.80px;width:300px;text-align:center;top:167.96px;font-size:10.8px;line-height:10.8px;font-weight:400;color:#a8abb0;">Save</div>
<svg class="ic" style="left:1133.59px;top:142.39px;width:14.22px;height:14.22px;color:#555a63;" viewBox="3.071 4.000 17.929 16.000" fill="none" stroke="currentColor" stroke-width="1.27" stroke-linecap="round" stroke-linejoin="round" preserveAspectRatio="none" ><path d="M20 20H8l-4.5-4.5a1.5 1.5 0 0 1 0-2.1L13 4l8 8l-8 8"/><path d="M9 8l8 8"/></svg>
<div class="t" style="left:990.70px;width:300px;text-align:center;top:167.96px;font-size:10.8px;line-height:10.8px;font-weight:400;color:#3a3d44;">Clear</div>
<svg class="ic" style="left:1175.42px;top:142.43px;width:14.15px;height:14.15px;color:#555a63;" viewBox="4.000 3.000 16.000 18.000" fill="none" stroke="currentColor" stroke-width="1.35" stroke-linecap="round" stroke-linejoin="round" preserveAspectRatio="none" ><path d="M4 6h16M9 6V3h6v3M6 6l1 15h10l1-15"/></svg>
<div class="t" style="left:1032.50px;width:300px;text-align:center;top:167.96px;font-size:10.8px;line-height:10.8px;font-weight:400;color:#3a3d44;">Delete</div>
<div class="t" style="left:1032.50px;width:300px;text-align:center;top:180.06px;font-size:10.8px;line-height:10.8px;font-weight:400;color:#3a3d44;">Object</div>
<div class="r" style="left:1216.10px;top:133.60px;width:1.00px;height:61.10px;background:#d9d9d9"></div>
<svg class="ic" style="left:1239.19px;top:143.19px;width:13.62px;height:13.62px;color:#4d525c;" viewBox="4.000 2.500 16.000 19.500" fill="none" stroke="currentColor" stroke-width="1.88" stroke-linecap="round" stroke-linejoin="round" preserveAspectRatio="none" ><rect x="4" y="5" width="16" height="17" rx="1.5"/><rect x="8.5" y="2.5" width="7" height="4" rx="1"/><path d="M8.5 13.5l2.5 2.5l5-5"/></svg>
<svg class="ic" style="left:1258.22px;top:150.88px;width:7.55px;height:4.25px;color:#4d525c;" viewBox="6.000 9.000 12.000 6.000" fill="none" stroke="currentColor" stroke-width="1.95" stroke-linecap="round" stroke-linejoin="round" preserveAspectRatio="none" ><path d="M6 9l6 6l6-6"/></svg>
<div class="t" style="left:1098.00px;width:300px;text-align:center;top:167.96px;font-size:10.8px;line-height:10.8px;font-weight:400;color:#3a3d44;">Clipboard</div>
<div class="r" style="left:1280.30px;top:133.60px;width:1.00px;height:61.10px;background:#d9d9d9"></div>
<svg class="ic" style="left:1301.69px;top:143.19px;width:13.62px;height:13.62px;color:#4d525c;" viewBox="4.500 3.000 15.000 19.000" fill="none" stroke="currentColor" stroke-width="1.88" stroke-linecap="round" stroke-linejoin="round" preserveAspectRatio="none" ><rect x="4.5" y="10" width="15" height="12" rx="1.5"/><path d="M8 10V7a4 4 0 0 1 8 0v3"/><circle cx="12" cy="16" r="1.3" fill="currentColor"/></svg>
<svg class="ic" style="left:1320.72px;top:150.88px;width:7.55px;height:4.25px;color:#4d525c;" viewBox="6.000 9.000 12.000 6.000" fill="none" stroke="currentColor" stroke-width="1.95" stroke-linecap="round" stroke-linejoin="round" preserveAspectRatio="none" ><path d="M6 9l6 6l6-6"/></svg>
<div class="t" style="left:1160.50px;width:300px;text-align:center;top:167.96px;font-size:10.8px;line-height:10.8px;font-weight:400;color:#3a3d44;">Reserve</div>
<div class="r" style="left:1341.00px;top:133.60px;width:1.00px;height:61.10px;background:#d9d9d9"></div>
<svg class="ic" style="left:1360.44px;top:143.19px;width:17.12px;height:13.62px;color:#4d525c;" viewBox="3.000 2.500 19.000 19.500" fill="none" stroke="currentColor" stroke-width="1.88" stroke-linecap="round" stroke-linejoin="round" preserveAspectRatio="none" ><ellipse cx="10" cy="5.5" rx="7" ry="3"/><path d="M3 5.5v13c0 1.7 3.1 3 7 3M17 5.5V11"/><circle cx="17.5" cy="17.5" r="2.5"/><path d="M17.5 13v1.5M17.5 20.5V22M13 17.5h1.5M20.5 17.5H22M14.3 14.3l1 1M19.7 19.7l1 1M14.3 20.7l1-1M19.7 15.3l1-1"/></svg>
<svg class="ic" style="left:1381.22px;top:150.88px;width:7.55px;height:4.25px;color:#4d525c;" viewBox="6.000 9.000 12.000 6.000" fill="none" stroke="currentColor" stroke-width="1.95" stroke-linecap="round" stroke-linejoin="round" preserveAspectRatio="none" ><path d="M6 9l6 6l6-6"/></svg>
<div class="t" style="left:1221.00px;width:300px;text-align:center;top:167.96px;font-size:10.8px;line-height:10.8px;font-weight:400;color:#3a3d44;">Manage</div>
<div class="r" style="left:1401.00px;top:133.60px;width:1.00px;height:61.10px;background:#d9d9d9"></div>
<svg class="ic" style="left:1430.19px;top:143.19px;width:13.62px;height:13.62px;color:#4d525c;" viewBox="3.000 3.000 18.000 18.000" fill="none" stroke="currentColor" stroke-width="1.88" stroke-linecap="round" stroke-linejoin="round" preserveAspectRatio="none" ><path d="M7 20V3M3 7l4-4l4 4"/><path d="M17 4v17M13 17l4 4l4-4"/></svg>
<svg class="ic" style="left:1449.22px;top:150.88px;width:7.55px;height:4.25px;color:#4d525c;" viewBox="6.000 9.000 12.000 6.000" fill="none" stroke="currentColor" stroke-width="1.95" stroke-linecap="round" stroke-linejoin="round" preserveAspectRatio="none" ><path d="M6 9l6 6l6-6"/></svg>
<div class="t" style="left:1289.00px;width:300px;text-align:center;top:167.96px;font-size:10.8px;line-height:10.8px;font-weight:400;color:#3a3d44;">Promote &amp;</div>
<div class="t" style="left:1289.00px;width:300px;text-align:center;top:180.06px;font-size:10.8px;line-height:10.8px;font-weight:400;color:#3a3d44;">Demote</div>
<div class="r" style="left:1476.30px;top:133.60px;width:1.00px;height:61.10px;background:#d9d9d9"></div>
<svg class="ic" style="left:1507.19px;top:143.19px;width:13.62px;height:13.62px;color:#4d525c;" viewBox="4.000 4.000 16.000 17.000" fill="none" stroke="currentColor" stroke-width="1.88" stroke-linecap="round" stroke-linejoin="round" preserveAspectRatio="none" ><path d="M12 21V13L5 5"/><path d="M5 5h0M4 9V4h5" /><path d="M16 8l4-4M15 4h5v5"/><circle cx="12" cy="13" r="0.5"/></svg>
<svg class="ic" style="left:1526.22px;top:150.88px;width:7.55px;height:4.25px;color:#4d525c;" viewBox="6.000 9.000 12.000 6.000" fill="none" stroke="currentColor" stroke-width="1.95" stroke-linecap="round" stroke-linejoin="round" preserveAspectRatio="none" ><path d="M6 9l6 6l6-6"/></svg>
<div class="t" style="left:1366.00px;width:300px;text-align:center;top:167.96px;font-size:10.8px;line-height:10.8px;font-weight:400;color:#3a3d44;">Revise and</div>
<div class="t" style="left:1366.00px;width:300px;text-align:center;top:180.06px;font-size:10.8px;line-height:10.8px;font-weight:400;color:#3a3d44;">Iterate</div>
<div class="r" style="left:1555.30px;top:133.60px;width:1.00px;height:61.10px;background:#d9d9d9"></div>
<svg class="ic" style="left:1577.19px;top:143.19px;width:13.62px;height:13.62px;color:#4d525c;" viewBox="2.500 2.500 19.000 19.000" fill="none" stroke="currentColor" stroke-width="1.88" stroke-linecap="round" stroke-linejoin="round" preserveAspectRatio="none" ><circle cx="12" cy="12" r="9.5"/><path d="M12 7v10M7 12h10"/></svg>
<svg class="ic" style="left:1596.22px;top:150.88px;width:7.55px;height:4.25px;color:#4d525c;" viewBox="6.000 9.000 12.000 6.000" fill="none" stroke="currentColor" stroke-width="1.95" stroke-linecap="round" stroke-linejoin="round" preserveAspectRatio="none" ><path d="M6 9l6 6l6-6"/></svg>
<div class="t" style="left:1436.00px;width:300px;text-align:center;top:167.96px;font-size:10.8px;line-height:10.8px;font-weight:400;color:#3a3d44;">Create</div>
<div class="r" style="left:1616.20px;top:133.60px;width:1.00px;height:61.10px;background:#d9d9d9"></div>
<svg class="ic" style="left:1637.59px;top:143.19px;width:13.62px;height:13.62px;color:#4d525c;" viewBox="6.000 2.000 15.500 19.000" fill="none" stroke="currentColor" stroke-width="1.88" stroke-linecap="round" stroke-linejoin="round" preserveAspectRatio="none" ><path d="M13 3H6v18l6-4.5l6 4.5V12"/><path d="M18 2v7M14.5 5.5h7"/></svg>
<svg class="ic" style="left:1656.62px;top:150.88px;width:7.55px;height:4.25px;color:#4d525c;" viewBox="6.000 9.000 12.000 6.000" fill="none" stroke="currentColor" stroke-width="1.95" stroke-linecap="round" stroke-linejoin="round" preserveAspectRatio="none" ><path d="M6 9l6 6l6-6"/></svg>
<div class="t" style="left:1496.40px;width:300px;text-align:center;top:167.96px;font-size:10.8px;line-height:10.8px;font-weight:400;color:#3a3d44;">Add To</div>
<div class="r" style="left:1676.30px;top:133.60px;width:1.00px;height:61.10px;background:#d9d9d9"></div>
<svg class="ic" style="left:1698.24px;top:143.19px;width:16.12px;height:13.62px;color:#4d525c;" viewBox="2.500 3.000 17.500 18.000" fill="none" stroke="currentColor" stroke-width="1.88" stroke-linecap="round" stroke-linejoin="round" preserveAspectRatio="none" ><rect x="2.5" y="7" width="15" height="9" rx="1"/><path d="M6 10h8M6 13h8"/><path d="M17 3h3v18h-3M18.5 12h0"/></svg>
<svg class="ic" style="left:1718.52px;top:150.88px;width:7.55px;height:4.25px;color:#4d525c;" viewBox="6.000 9.000 12.000 6.000" fill="none" stroke="currentColor" stroke-width="1.95" stroke-linecap="round" stroke-linejoin="round" preserveAspectRatio="none" ><path d="M6 9l6 6l6-6"/></svg>
<div class="t" style="left:1558.30px;width:300px;text-align:center;top:167.96px;font-size:10.8px;line-height:10.8px;font-weight:400;color:#3a3d44;">Print &amp;</div>
<div class="t" style="left:1558.30px;width:300px;text-align:center;top:180.06px;font-size:10.8px;line-height:10.8px;font-weight:400;color:#3a3d44;">Export</div>
<div class="r" style="left:1739.50px;top:133.60px;width:1.00px;height:61.10px;background:#d9d9d9"></div>
<svg class="ic" style="left:1756.97px;top:160.17px;width:5.25px;height:9.65px;color:#111;" viewBox="9.000 4.000 8.000 16.000" fill="none" stroke="currentColor" stroke-width="1.95" stroke-linecap="round" stroke-linejoin="round" preserveAspectRatio="none" ><path d="M9 4l8 8l-8 8"/></svg>
<svg class="ic" style="left:1785.29px;top:141.69px;width:13.62px;height:13.62px;color:#333;" viewBox="2.500 2.500 19.000 19.000" fill="none" stroke="currentColor" stroke-width="1.88" stroke-linecap="round" stroke-linejoin="round" preserveAspectRatio="none" ><circle cx="12" cy="12" r="9.5"/><path d="M12 7v10M7 12h10"/></svg>
<div class="t" style="left:1642.10px;width:300px;text-align:center;top:166.46px;font-size:10.8px;line-height:10.8px;font-weight:400;color:#3a3d44;">Quick</div>
<div class="t" style="left:1642.10px;width:300px;text-align:center;top:178.26px;font-size:10.8px;line-height:10.8px;font-weight:400;color:#3a3d44;">Create</div>
<svg class="ic" style="left:1832.49px;top:141.69px;width:13.62px;height:13.62px;color:#333;" viewBox="5.000 3.000 14.000 18.000" fill="none" stroke="currentColor" stroke-width="1.88" stroke-linecap="round" stroke-linejoin="round" preserveAspectRatio="none" ><path d="M12 15V3M7.5 7.5L12 3l4.5 4.5"/><path d="M5 11v10h14V11"/></svg>
<div class="t" style="left:1689.30px;width:300px;text-align:center;top:166.46px;font-size:10.8px;line-height:10.8px;font-weight:400;color:#3a3d44;">Share</div>
<div class="t" style="left:1689.30px;width:300px;text-align:center;top:178.26px;font-size:10.8px;line-height:10.8px;font-weight:400;color:#3a3d44;">Widget</div>
<svg class="ic" style="left:1874.19px;top:141.69px;width:13.62px;height:13.62px;color:#333;" viewBox="3.000 3.000 18.000 18.000" fill="none" stroke="currentColor" stroke-width="1.88" stroke-linecap="round" stroke-linejoin="round" preserveAspectRatio="none" ><rect x="3" y="3" width="18" height="18" rx="2"/><path d="M9 3v18M15 3v18"/></svg>
<div class="t" style="left:1731.00px;width:300px;text-align:center;top:166.46px;font-size:10.8px;line-height:10.8px;font-weight:400;color:#3a3d44;">Views</div>
<div class="r" style="left:982.00px;top:198.50px;width:926.00px;height:1.00px;background:#ececec"></div>
<div class="r" style="left:982.00px;top:199.00px;width:884.50px;height:68.50px;background:#f2f2f2"></div>
<div class="clip" style="left:999px;top:221.30px;width:34.5px;height:28px;border-radius:2px"><svg style="position:absolute;left:0;top:0;width:34.5px;height:28px" viewBox="0 0 34 28" preserveAspectRatio="none"><rect width="34" height="28" fill="#4a4644"/><rect x="0" y="0" width="34" height="5" fill="#8a8680"/><rect x="4" y="5" width="18" height="13" fill="#e8eef2"/><path d="M7 9h12M7 12h12M7 15h8" stroke="#8ab0d0" stroke-width="1"/>
<rect x="23" y="3" width="11" height="25" fill="#5a3a2e"/><circle cx="27.5" cy="9" r="4.5" fill="#3a2a22"/><rect x="2" y="19" width="20" height="7" fill="#c8b4a4"/><rect x="14" y="20" width="8" height="6" fill="#d8a890"/><rect x="0" y="25" width="34" height="3" fill="#3a3432"/></svg></div>
<svg class="ic" style="left:1044.80px;top:226.90px;width:16.50px;height:15.90px;color:#3b58a3;" viewBox="3.000 3.000 18.000 18.000" fill="none" stroke="currentColor" stroke-width="1.80" stroke-linecap="round" stroke-linejoin="round" preserveAspectRatio="none" ><rect x="3" y="3" width="18" height="18" rx="2"/><path d="M12 7v10M7.7 9.5l8.6 5M16.3 9.5l-8.6 5"/></svg>
<div class="t" style="left:1069.00px;top:226.36px;font-size:16.7px;line-height:16.7px;font-weight:400;color:#3b58a3;">Structural assembly misalignment (A)</div>
<svg class="ic" style="left:1810.97px;top:232.67px;width:10.05px;height:4.55px;color:#555;" viewBox="5.000 8.000 14.000 7.000" fill="none" stroke="currentColor" stroke-width="1.95" stroke-linecap="round" stroke-linejoin="round" preserveAspectRatio="none" ><path d="M5 15l7-7l7 7"/></svg>
<div class="r" style="left:1866.00px;top:199.00px;width:1.00px;height:302.50px;background:#e8e8e8"></div>
<div class="r" style="left:1872.00px;top:211.90px;width:29.00px;height:29.00px;border:1.3px solid #8a63d3;border-radius:4px"></div>
<svg class="ic" style="left:1878.21px;top:218.06px;width:16.57px;height:16.68px;color:#8a63d3;" viewBox="2.500 2.500 19.000 19.000" fill="none" stroke="currentColor" stroke-width="1.12" stroke-linecap="round" stroke-linejoin="round" preserveAspectRatio="none" ><circle cx="12" cy="12" r="9.5"/><path d="M12 11v6"/><circle cx="12" cy="7.5" r="0.8" fill="currentColor"/></svg>
<div class="r" style="left:1872.00px;top:254.60px;width:29.00px;height:29.00px;border:1.3px solid #3a62c6;border-radius:4px"></div>
<svg class="ic" style="left:1877.64px;top:260.24px;width:17.73px;height:17.73px;color:#3a62c6;" viewBox="3.000 3.500 16.770 17.000" fill="none" stroke="currentColor" stroke-width="1.27" stroke-linecap="round" stroke-linejoin="round" preserveAspectRatio="none" ><path d="M6 6.5a8.5 8.5 0 0 1 12.5 0M19.5 10.5a8.5 8.5 0 0 1-4 9.5M8.5 20a8.5 8.5 0 0 1-4-9.5"/><path d="M16 4.5l2.5 2l.5-3M17 20.5l-2-1.5l2-2M3 12.5l1.5-2.5l2.5 1.5"/></svg>
<div class="r" style="left:1872.00px;top:297.30px;width:29.00px;height:29.00px;border:1.3px solid #1e9a4b;border-radius:4px"></div>
<svg class="ic" style="left:1878.12px;top:308.43px;width:16.75px;height:6.75px;color:#1e9a4b;" viewBox="3.000 8.000 18.000 8.000" fill="none" stroke="currentColor" stroke-width="2.25" stroke-linecap="round" stroke-linejoin="round" preserveAspectRatio="none" ><path d="M9 8H7a4 4 0 0 0 0 8h2M15 8h2a4 4 0 0 1 0 8h-2M8 12h8"/></svg>
<div class="r" style="left:1872.00px;top:340.00px;width:29.00px;height:29.00px;border:1.3px solid #60656c;border-radius:4px"></div>
<svg class="ic" style="left:1879.60px;top:347.45px;width:13.80px;height:14.10px;color:#60656c;" viewBox="4.000 3.000 16.000 16.914" fill="none" stroke="currentColor" stroke-width="1.20" stroke-linecap="round" stroke-linejoin="round" preserveAspectRatio="none" ><path d="M4 12a8 8 0 1 0 2.3-5.7"/><path d="M4 3v4h4M12 8v4l3 2"/></svg>
<div class="r" style="left:1872.00px;top:382.70px;width:29.00px;height:29.00px;border:1.3px solid #1d8c7c;border-radius:4px"></div>
<svg class="ic" style="left:1877.67px;top:389.73px;width:17.65px;height:14.95px;color:#1d8c7c;" viewBox="2.000 3.300 20.000 17.700" fill="none" stroke="currentColor" stroke-width="1.35" stroke-linecap="round" stroke-linejoin="round" preserveAspectRatio="none" ><circle cx="12" cy="11" r="3"/><path d="M7 21v-1.5a3.5 3.5 0 0 1 3.5-3.5h3a3.5 3.5 0 0 1 3.5 3.5V21zM7 21h10"/><circle cx="5.5" cy="5.5" r="2.2"/><circle cx="18.5" cy="5.5" r="2.2"/><path d="M2 13v-1a3 3 0 0 1 3-3h1.5M22 13v-1a3 3 0 0 0-3-3h-1.5"/></svg>
<div class="r" style="left:1872.00px;top:425.40px;width:29.00px;height:29.00px;border:1.3px solid #d9793a;border-radius:4px"></div>
<svg class="ic" style="left:1879.56px;top:432.96px;width:13.88px;height:13.88px;color:#d9793a;" viewBox="3.000 3.000 18.000 18.000" fill="none" stroke="currentColor" stroke-width="1.12" stroke-linecap="round" stroke-linejoin="round" preserveAspectRatio="none" ><rect x="3" y="3" width="18" height="18" rx="1.5"/><path d="M3 7h18" stroke-width="2.5"/><path d="M7 14s2-3 5-3s5 3 5 3s-2 3-5 3s-5-3-5-3z"/><circle cx="12" cy="14" r="0.8" fill="currentColor"/></svg>
<div class="r" style="left:1862.00px;top:268.50px;width:4.00px;height:93.50px;background:#e4e4e4"></div>
<div class="r" style="left:1847.70px;top:316.80px;width:18.30px;height:36.20px;background:#9da1a9;border-radius:5px 0 0 5px"></div>
<svg class="ic" style="left:1854.33px;top:329.82px;width:4.85px;height:10.35px;color:#fff;" viewBox="8.000 5.000 7.000 14.000" fill="none" stroke="currentColor" stroke-width="1.65" stroke-linecap="round" stroke-linejoin="round" preserveAspectRatio="none" ><path d="M15 5l-7 7l7 7"/></svg>
<div class="clip" style="left:982px;top:267.5px;width:880px;height:234.00px">
<div class="t" style="left:15.00px;top:29.22px;font-size:13.8px;line-height:13.8px;font-weight:700;color:#111;">Indicators</div>
<div class="clip" style="left:163px;top:20.20px;width:261px;height:28px">
<svg class="ic" style="left:3px;top:4.80px;width:14px;height:11px;color:#1b8a1b" viewBox="4 6.5 16 11" fill="none" stroke="currentColor" stroke-width="1.9" preserveAspectRatio="none"><path d="M4 12.5l5 5L20 6.5"/></svg><svg class="ic" style="left:24px;top:3.80px;width:13.5px;height:12px;color:#f2c300" viewBox="3 5 17 14" fill="none" stroke="currentColor" stroke-width="1.7" preserveAspectRatio="none"><path d="M3 12h17M13 5l7 7l-7 7"/></svg>
</div>
<div class="t" style="left:15.00px;top:69.82px;font-size:13.8px;line-height:13.8px;font-weight:700;color:#111;">Risk Priority</div>
<div class="clip" style="left:163px;top:60.80px;width:261px;height:28px">
<div class="r" style="left:0;top:3.70px;width:75px;height:20.6px;background:#fce347;border-radius:4px"></div><div class="r" style="left:8px;top:9.80px;width:5px;height:5px;border-radius:50%;background:#111"></div><div class="t" style="left:18.5px;top:6.33px;font-size:15.2px;line-height:15.2px;color:#111">Medium</div>
</div>
<div class="t" style="left:15.00px;top:110.42px;font-size:13.8px;line-height:13.8px;font-weight:700;color:#111;">Risk Potential Impact</div>
<div class="clip" style="left:163px;top:101.40px;width:261px;height:28px">
<div class="t" style="left:0;top:6.08px;font-size:15.5px;line-height:15.5px;color:#1e1e1e">Medium</div>
</div>
<div class="t" style="left:15.00px;top:151.02px;font-size:13.8px;line-height:13.8px;font-weight:700;color:#111;">Risk Assessment</div>
<div class="clip" style="left:163px;top:142.00px;width:261px;height:28px">
<div class="t" style="left:0;top:6.08px;font-size:15.5px;line-height:15.5px;color:#1e1e1e">To be Assessed</div>
</div>
<div class="t" style="left:15.00px;top:191.62px;font-size:13.8px;line-height:13.8px;font-weight:700;color:#111;">Risk Mitigation Stra...</div>
<div class="clip" style="left:163px;top:182.60px;width:261px;height:28px">
<div class="t" style="left:0;top:6.08px;font-size:15.5px;line-height:15.5px;color:#1e1e1e">Refer to the specification document</div>
</div>
<div class="t" style="left:15.00px;top:232.22px;font-size:13.8px;line-height:13.8px;font-weight:700;color:#111;">Risk Analysis</div>
<div class="clip" style="left:163px;top:223.20px;width:261px;height:28px">
<div class="t" style="left:0;top:6.08px;font-size:15.5px;line-height:15.5px;color:#1e1e1e">Completed</div>
</div>
<div class="t" style="left:434.70px;top:29.22px;font-size:13.8px;line-height:13.8px;font-weight:700;color:#111;">Description</div>
<div class="clip" style="left:583px;top:20.20px;width:261px;height:28px">
<div class="t" style="left:0;top:6.08px;font-size:15.5px;line-height:15.5px;color:#1e1e1e">Structural misallignment</div>
</div>
<div class="t" style="left:434.70px;top:69.82px;font-size:13.8px;line-height:13.8px;font-weight:700;color:#111;">Risk Type</div>
<div class="clip" style="left:583px;top:60.80px;width:261px;height:28px">
<div class="r" style="left:0;top:3.70px;width:117px;height:20.6px;background:#f8d5d9;border-radius:4px"></div><svg class="ic" style="left:1.6px;top:4.50px;width:15px;height:15px" viewBox="0 0 15 15" fill="none" stroke="#111" stroke-linecap="round"><path d="M1.2 1.4L8.6 8.8" stroke-width="1.7"/><rect x="8.6" y="10.2" width="6" height="3.2" rx="0.8" transform="rotate(45 11.6 11.8)" fill="#111" stroke="none"/><rect x="10.1" y="11.1" width="3" height="1.2" transform="rotate(45 11.6 11.7)" fill="#f8d5d9" stroke="none"/><circle cx="2.6" cy="12.3" r="1.9" stroke-width="1.4"/><path d="M4 10.9L10.6 4.3" stroke-width="1.8"/><path d="M9.6 5.2a2.6 2.6 0 0 1 3.6-3.6l-1.3 1.4l0.4 1l1 .4l1.4-1.3a2.6 2.6 0 0 1-3.6 3.6" stroke-width="1.4" fill="#111"/></svg><div class="t" style="left:18.5px;top:6.33px;font-size:15.2px;line-height:15.2px;color:#111">Technical Risk</div>
</div>
<div class="t" style="left:434.70px;top:110.42px;font-size:13.8px;line-height:13.8px;font-weight:700;color:#111;">Risk Likelihood</div>
<div class="clip" style="left:583px;top:101.40px;width:261px;height:28px">
<div class="r" style="left:0;top:3.70px;width:73.5px;height:20.6px;background:#f7e6a8;border-radius:4px"></div><svg class="ic" style="left:3px;top:6.00px;width:13px;height:13.5px" viewBox="0 0 13 13.5" fill="none" stroke="#111" stroke-width="1.5" stroke-linecap="round" stroke-linejoin="round"><path d="M12.3 4.1H1M4.2 0.8L1 4.1L4.2 7.2"/><path d="M0.8 10.2H12.2M9 7L12.2 10.2L9 13"/></svg><div class="t" style="left:18.5px;top:6.33px;font-size:15.2px;line-height:15.2px;color:#111">Medium</div>
</div>
<div class="t" style="left:434.70px;top:151.02px;font-size:13.8px;line-height:13.8px;font-weight:700;color:#111;">Risk Trigger</div>
<div class="clip" style="left:583px;top:142.00px;width:261px;height:28px">
<div class="r" style="left:0;top:3.70px;width:177px;height:20.6px;background:#fde1bf;border-radius:4px"></div><svg class="ic" style="left:3.2px;top:5.70px;width:12px;height:12.2px" viewBox="0 0 12 12.2"><path d="M0 4.5L1.6 3.5V4.5L3.6 3.3V4.5L5.6 3.3V4.5L9.6 4.5V0.3H11.8V12.2H0Z" fill="#111"/><path d="M1.2 7.3H6.5M8.2 7.3H10.5M1.2 9.9H3.5M5 9.9H7.5M8.8 9.9H10.6" stroke="#f2dcc0" stroke-width="1"/></svg><div class="t" style="left:18.5px;top:6.33px;font-size:15.2px;line-height:15.2px;color:#111">Manufacturing Defects</div>
</div>
<div class="t" style="left:434.70px;top:191.62px;font-size:13.8px;line-height:13.8px;font-weight:700;color:#111;">Risk Assessment D...</div>
<div class="clip" style="left:583px;top:182.60px;width:261px;height:28px">
<div class="t" style="left:0;top:6.08px;font-size:15.5px;line-height:15.5px;color:#1e1e1e">30/04/2026</div>
</div>
<div class="t" style="left:434.70px;top:232.22px;font-size:13.8px;line-height:13.8px;font-weight:700;color:#111;">Needs Review</div>
<div class="clip" style="left:583px;top:223.20px;width:261px;height:28px">
<div class="r" style="left:0;top:4.20px;width:19.7px;height:19.7px;border:1px solid #d8d8d8;border-radius:2px;background:#fff"></div>
</div>
</div>
<div class="r" style="left:1427.00px;top:490.50px;width:36.00px;height:11.00px;background:#9da1a9;border-radius:5px 5px 0 0"></div>
<div class="r" style="left:981px;top:504px;width:928px;height:409.5px;border:1px solid #3a3d44;border-radius:7px 7px 6px 6px;background:#fff;overflow:hidden"></div>
<div class="r" style="left:981px;top:504px;width:928px;height:35px;background:#29519f;border-radius:7px 7px 0 0"></div>
<svg class="ic" style="left:994.53px;top:514.23px;width:15.95px;height:15.95px;color:#d6e0f4;" viewBox="3.000 3.000 18.000 18.000" fill="none" stroke="currentColor" stroke-width="1.65" stroke-linecap="round" stroke-linejoin="round" preserveAspectRatio="none" ><rect x="3" y="3" width="18" height="18" rx="3"/><path d="M7 7.5h10"/><circle cx="8" cy="12" r="1.3"/><circle cx="8" cy="16.5" r="1.3"/><path d="M11.5 12h5.5M11.5 16.5h5.5"/></svg>
<div class="t" style="left:1022.20px;top:515.27px;font-size:16.1px;line-height:16.1px;font-weight:700;color:#fff;">Details</div>
<div class="r" style="left:1081.50px;top:513.50px;width:2.60px;height:19.10px;background:#f4f6ff"></div>
<svg class="ic" style="left:1090.05px;top:515.35px;width:16.30px;height:16.30px;color:#fff;" viewBox="2.000 2.000 20.000 20.000" fill="none" stroke="currentColor" stroke-width="2.10" stroke-linecap="round" stroke-linejoin="round" preserveAspectRatio="none" ><path d="M3.67 6.08L8.25 9.96M2 12.29H8.25M3.67 18.12L8.25 14.62M9.08 3.36V20.83M12.83 2V22L22 16.56V6.85L12.83 2M12.83 10.35L22 6.85"/></svg>
<div class="t" style="left:1112.80px;top:515.36px;font-size:16.0px;line-height:16.0px;font-weight:700;color:#fff;">Reduced durability and potential failure during test flights (A)</div>
<svg class="ic" style="left:1607.10px;top:515.40px;width:14.10px;height:12.60px;color:#ffffff;" viewBox="2.500 3.000 19.000 17.500" fill="none" stroke="currentColor" stroke-width="0.00" stroke-linecap="round" stroke-linejoin="round" preserveAspectRatio="none" ><path d="M12 3L2.5 11.5H5.5V20.5H10V15H14V20.5H18.5V11.5H21.5Z" fill="currentColor" stroke="none"/></svg>
<svg class="ic" style="left:1638.80px;top:514.90px;width:10.50px;height:13.60px;color:#ffffff;" viewBox="5.000 3.000 14.000 19.000" fill="none" stroke="currentColor" stroke-width="1.80" stroke-linecap="round" stroke-linejoin="round" preserveAspectRatio="none" ><path d="M8 11V7a4 4 0 0 1 8 0v1" /><rect x="5" y="11" width="14" height="11" rx="1.5" fill="currentColor"/><circle cx="12" cy="16.5" r="1.6" fill="#29519f" stroke="none"/></svg>
<svg class="ic" style="left:1665.92px;top:514.62px;width:14.55px;height:14.15px;color:#ffffff;" viewBox="3.000 3.000 18.000 18.000" fill="none" stroke="currentColor" stroke-width="1.65" stroke-linecap="round" stroke-linejoin="round" preserveAspectRatio="none" ><circle cx="10" cy="10" r="7"/><path d="M15.5 15.5L21 21"/></svg>
<svg class="ic" style="left:1693.79px;top:511.79px;width:16.83px;height:16.63px;color:#ffffff;" viewBox="2.000 2.000 20.000 20.000" fill="none" stroke="currentColor" stroke-width="1.58" stroke-linecap="round" stroke-linejoin="round" preserveAspectRatio="none" ><circle cx="12" cy="12" r="10"/><path d="M9.2 9.2a2.9 2.9 0 0 1 5.7.6c0 2-2.9 2.4-2.9 4.6"/><circle cx="12" cy="17.6" r="0.6" fill="currentColor"/></svg>
<svg class="ic" style="left:1723.89px;top:514.99px;width:16.73px;height:14.22px;color:#ffffff;" viewBox="3.075 3.075 17.851 17.851" fill="none" stroke="currentColor" stroke-width="1.58" stroke-linecap="round" stroke-linejoin="round" preserveAspectRatio="none" ><path d="M10 14a4.5 4.5 0 0 0 6.4 0l3.2-3.2a4.5 4.5 0 0 0-6.4-6.4l-1 1"/><path d="M14 10a4.5 4.5 0 0 0-6.4 0l-3.2 3.2a4.5 4.5 0 0 0 6.4 6.4l1-1"/></svg>
<svg class="ic" style="left:1753.88px;top:514.27px;width:12.65px;height:12.75px;color:#ffffff;" viewBox="4.500 3.500 15.000 15.990" fill="none" stroke="currentColor" stroke-width="1.95" stroke-linecap="round" stroke-linejoin="round" preserveAspectRatio="none" ><path d="M19.5 12a7.5 7.5 0 1 1-2.5-5.6"/><path d="M19.5 3.5v5.5h-5.5" fill="currentColor"/></svg>
<svg class="ic" style="left:1790.50px;top:514.60px;width:2.60px;height:13.60px;color:#ffffff;" viewBox="10.700 3.700 2.600 16.600" fill="none" stroke="currentColor" stroke-width="0.00" stroke-linecap="round" stroke-linejoin="round" preserveAspectRatio="none" ><circle cx="12" cy="5" r="1.3" fill="currentColor"/><circle cx="12" cy="12" r="1.3" fill="currentColor"/><circle cx="12" cy="19" r="1.3" fill="currentColor"/></svg>
<svg class="ic" style="left:1818.17px;top:515.98px;width:13.85px;height:11.85px;color:#ffffff;" viewBox="3.500 4.388 16.417 15.000" fill="none" stroke="currentColor" stroke-width="1.95" stroke-linecap="round" stroke-linejoin="round" preserveAspectRatio="none" ><path d="M5 13a7.5 7.5 0 1 0 2.2-6.5"/><path d="M3.5 10.5l2 4l3.5-2.5" fill="currentColor"/></svg>
<svg class="ic" style="left:1851.11px;top:516.01px;width:12.18px;height:11.77px;color:#ffffff;" viewBox="4.000 4.000 16.000 16.000" fill="none" stroke="currentColor" stroke-width="2.03" stroke-linecap="round" stroke-linejoin="round" preserveAspectRatio="none" ><rect x="4" y="4" width="16" height="16" rx="1.5"/></svg>
<svg class="ic" style="left:1885.28px;top:517.68px;width:10.15px;height:9.35px;color:#ffffff;" viewBox="5.000 5.000 14.000 14.000" fill="none" stroke="currentColor" stroke-width="1.95" stroke-linecap="round" stroke-linejoin="round" preserveAspectRatio="none" ><path d="M5 5l14 14M19 5L5 19"/></svg>
<svg class="ic" style="left:1003.69px;top:552.19px;width:13.62px;height:13.62px;color:#4d525c;" viewBox="3.500 3.500 17.000 16.500" fill="none" stroke="currentColor" stroke-width="1.88" stroke-linecap="round" stroke-linejoin="round" preserveAspectRatio="none" ><path d="M11 4H5a1.5 1.5 0 0 0-1.5 1.5v13A1.5 1.5 0 0 0 5 20h13a1.5 1.5 0 0 0 1.5-1.5V13"/><path d="M13 3.5h7.5V11M20.5 3.5L11 13"/></svg>
<svg class="ic" style="left:1022.73px;top:559.88px;width:7.55px;height:4.25px;color:#4d525c;" viewBox="6.000 9.000 12.000 6.000" fill="none" stroke="currentColor" stroke-width="1.95" stroke-linecap="round" stroke-linejoin="round" preserveAspectRatio="none" ><path d="M6 9l6 6l6-6"/></svg>
<div class="t" style="left:862.50px;width:300px;text-align:center;top:576.96px;font-size:10.8px;line-height:10.8px;font-weight:400;color:#3a3d44;">Open</div>
<div class="r" style="left:1043.50px;top:542.60px;width:1.00px;height:61.10px;background:#d9d9d9"></div>
<svg class="ic" style="left:1061.89px;top:551.39px;width:14.22px;height:14.22px;color:#555a63;" viewBox="3.000 6.000 18.000 16.500" fill="none" stroke="currentColor" stroke-width="1.27" stroke-linecap="round" stroke-linejoin="round" preserveAspectRatio="none" ><path d="M5 16.5L15.5 6l3 3L8 19.5H5z"/><path d="M3 22.5h18"/></svg>
<div class="t" style="left:919.00px;width:300px;text-align:center;top:576.96px;font-size:10.8px;line-height:10.8px;font-weight:400;color:#3a3d44;">Edit</div>
<svg class="ic" style="left:1097.69px;top:551.39px;width:14.22px;height:14.22px;color:#b5b8bd;" viewBox="4.000 3.000 16.000 18.000" fill="none" stroke="currentColor" stroke-width="1.27" stroke-linecap="round" stroke-linejoin="round" preserveAspectRatio="none" ><path d="M5 3h11l4 4v13a1 1 0 0 1-1 1H5a1 1 0 0 1-1-1V4a1 1 0 0 1 1-1z"/><path d="M8 3v5h7V3"/><circle cx="12" cy="15" r="2.5"/></svg>
<div class="t" style="left:954.80px;width:300px;text-align:center;top:576.96px;font-size:10.8px;line-height:10.8px;font-weight:400;color:#a8abb0;">Save</div>
<svg class="ic" style="left:1133.59px;top:551.39px;width:14.22px;height:14.22px;color:#555a63;" viewBox="3.071 4.000 17.929 16.000" fill="none" stroke="currentColor" stroke-width="1.27" stroke-linecap="round" stroke-linejoin="round" preserveAspectRatio="none" ><path d="M20 20H8l-4.5-4.5a1.5 1.5 0 0 1 0-2.1L13 4l8 8l-8 8"/><path d="M9 8l8 8"/></svg>
<div class="t" style="left:990.70px;width:300px;text-align:center;top:576.96px;font-size:10.8px;line-height:10.8px;font-weight:400;color:#3a3d44;">Clear</div>
<svg class="ic" style="left:1175.42px;top:551.42px;width:14.15px;height:14.15px;color:#555a63;" viewBox="4.000 3.000 16.000 18.000" fill="none" stroke="currentColor" stroke-width="1.35" stroke-linecap="round" stroke-linejoin="round" preserveAspectRatio="none" ><path d="M4 6h16M9 6V3h6v3M6 6l1 15h10l1-15"/></svg>
<div class="t" style="left:1032.50px;width:300px;text-align:center;top:576.96px;font-size:10.8px;line-height:10.8px;font-weight:400;color:#3a3d44;">Delete</div>
<div class="t" style="left:1032.50px;width:300px;text-align:center;top:589.06px;font-size:10.8px;line-height:10.8px;font-weight:400;color:#3a3d44;">Object</div>
<div class="r" style="left:1216.10px;top:542.60px;width:1.00px;height:61.10px;background:#d9d9d9"></div>
<svg class="ic" style="left:1239.19px;top:552.19px;width:13.62px;height:13.62px;color:#4d525c;" viewBox="4.000 2.500 16.000 19.500" fill="none" stroke="currentColor" stroke-width="1.88" stroke-linecap="round" stroke-linejoin="round" preserveAspectRatio="none" ><rect x="4" y="5" width="16" height="17" rx="1.5"/><rect x="8.5" y="2.5" width="7" height="4" rx="1"/><path d="M8.5 13.5l2.5 2.5l5-5"/></svg>
<svg class="ic" style="left:1258.22px;top:559.88px;width:7.55px;height:4.25px;color:#4d525c;" viewBox="6.000 9.000 12.000 6.000" fill="none" stroke="currentColor" stroke-width="1.95" stroke-linecap="round" stroke-linejoin="round" preserveAspectRatio="none" ><path d="M6 9l6 6l6-6"/></svg>
<div class="t" style="left:1098.00px;width:300px;text-align:center;top:576.96px;font-size:10.8px;line-height:10.8px;font-weight:400;color:#3a3d44;">Clipboard</div>
<div class="r" style="left:1280.30px;top:542.60px;width:1.00px;height:61.10px;background:#d9d9d9"></div>
<svg class="ic" style="left:1301.69px;top:552.19px;width:13.62px;height:13.62px;color:#4d525c;" viewBox="4.500 3.000 15.000 19.000" fill="none" stroke="currentColor" stroke-width="1.88" stroke-linecap="round" stroke-linejoin="round" preserveAspectRatio="none" ><rect x="4.5" y="10" width="15" height="12" rx="1.5"/><path d="M8 10V7a4 4 0 0 1 8 0v3"/><circle cx="12" cy="16" r="1.3" fill="currentColor"/></svg>
<svg class="ic" style="left:1320.72px;top:559.88px;width:7.55px;height:4.25px;color:#4d525c;" viewBox="6.000 9.000 12.000 6.000" fill="none" stroke="currentColor" stroke-width="1.95" stroke-linecap="round" stroke-linejoin="round" preserveAspectRatio="none" ><path d="M6 9l6 6l6-6"/></svg>
<div class="t" style="left:1160.50px;width:300px;text-align:center;top:576.96px;font-size:10.8px;line-height:10.8px;font-weight:400;color:#3a3d44;">Reserve</div>
<div class="r" style="left:1341.00px;top:542.60px;width:1.00px;height:61.10px;background:#d9d9d9"></div>
<svg class="ic" style="left:1360.44px;top:552.19px;width:17.12px;height:13.62px;color:#4d525c;" viewBox="3.000 2.500 19.000 19.500" fill="none" stroke="currentColor" stroke-width="1.88" stroke-linecap="round" stroke-linejoin="round" preserveAspectRatio="none" ><ellipse cx="10" cy="5.5" rx="7" ry="3"/><path d="M3 5.5v13c0 1.7 3.1 3 7 3M17 5.5V11"/><circle cx="17.5" cy="17.5" r="2.5"/><path d="M17.5 13v1.5M17.5 20.5V22M13 17.5h1.5M20.5 17.5H22M14.3 14.3l1 1M19.7 19.7l1 1M14.3 20.7l1-1M19.7 15.3l1-1"/></svg>
<svg class="ic" style="left:1381.22px;top:559.88px;width:7.55px;height:4.25px;color:#4d525c;" viewBox="6.000 9.000 12.000 6.000" fill="none" stroke="currentColor" stroke-width="1.95" stroke-linecap="round" stroke-linejoin="round" preserveAspectRatio="none" ><path d="M6 9l6 6l6-6"/></svg>
<div class="t" style="left:1221.00px;width:300px;text-align:center;top:576.96px;font-size:10.8px;line-height:10.8px;font-weight:400;color:#3a3d44;">Manage</div>
<div class="r" style="left:1401.00px;top:542.60px;width:1.00px;height:61.10px;background:#d9d9d9"></div>
<svg class="ic" style="left:1430.19px;top:552.19px;width:13.62px;height:13.62px;color:#4d525c;" viewBox="3.000 3.000 18.000 18.000" fill="none" stroke="currentColor" stroke-width="1.88" stroke-linecap="round" stroke-linejoin="round" preserveAspectRatio="none" ><path d="M7 20V3M3 7l4-4l4 4"/><path d="M17 4v17M13 17l4 4l4-4"/></svg>
<svg class="ic" style="left:1449.22px;top:559.88px;width:7.55px;height:4.25px;color:#4d525c;" viewBox="6.000 9.000 12.000 6.000" fill="none" stroke="currentColor" stroke-width="1.95" stroke-linecap="round" stroke-linejoin="round" preserveAspectRatio="none" ><path d="M6 9l6 6l6-6"/></svg>
<div class="t" style="left:1289.00px;width:300px;text-align:center;top:576.96px;font-size:10.8px;line-height:10.8px;font-weight:400;color:#3a3d44;">Promote &amp;</div>
<div class="t" style="left:1289.00px;width:300px;text-align:center;top:589.06px;font-size:10.8px;line-height:10.8px;font-weight:400;color:#3a3d44;">Demote</div>
<div class="r" style="left:1476.30px;top:542.60px;width:1.00px;height:61.10px;background:#d9d9d9"></div>
<svg class="ic" style="left:1507.19px;top:552.19px;width:13.62px;height:13.62px;color:#4d525c;" viewBox="4.000 4.000 16.000 17.000" fill="none" stroke="currentColor" stroke-width="1.88" stroke-linecap="round" stroke-linejoin="round" preserveAspectRatio="none" ><path d="M12 21V13L5 5"/><path d="M5 5h0M4 9V4h5" /><path d="M16 8l4-4M15 4h5v5"/><circle cx="12" cy="13" r="0.5"/></svg>
<svg class="ic" style="left:1526.22px;top:559.88px;width:7.55px;height:4.25px;color:#4d525c;" viewBox="6.000 9.000 12.000 6.000" fill="none" stroke="currentColor" stroke-width="1.95" stroke-linecap="round" stroke-linejoin="round" preserveAspectRatio="none" ><path d="M6 9l6 6l6-6"/></svg>
<div class="t" style="left:1366.00px;width:300px;text-align:center;top:576.96px;font-size:10.8px;line-height:10.8px;font-weight:400;color:#3a3d44;">Revise and</div>
<div class="t" style="left:1366.00px;width:300px;text-align:center;top:589.06px;font-size:10.8px;line-height:10.8px;font-weight:400;color:#3a3d44;">Iterate</div>
<div class="r" style="left:1555.30px;top:542.60px;width:1.00px;height:61.10px;background:#d9d9d9"></div>
<svg class="ic" style="left:1577.19px;top:552.19px;width:13.62px;height:13.62px;color:#4d525c;" viewBox="2.500 2.500 19.000 19.000" fill="none" stroke="currentColor" stroke-width="1.88" stroke-linecap="round" stroke-linejoin="round" preserveAspectRatio="none" ><circle cx="12" cy="12" r="9.5"/><path d="M12 7v10M7 12h10"/></svg>
<svg class="ic" style="left:1596.22px;top:559.88px;width:7.55px;height:4.25px;color:#4d525c;" viewBox="6.000 9.000 12.000 6.000" fill="none" stroke="currentColor" stroke-width="1.95" stroke-linecap="round" stroke-linejoin="round" preserveAspectRatio="none" ><path d="M6 9l6 6l6-6"/></svg>
<div class="t" style="left:1436.00px;width:300px;text-align:center;top:576.96px;font-size:10.8px;line-height:10.8px;font-weight:400;color:#3a3d44;">Create</div>
<div class="r" style="left:1616.20px;top:542.60px;width:1.00px;height:61.10px;background:#d9d9d9"></div>
<svg class="ic" style="left:1637.59px;top:552.19px;width:13.62px;height:13.62px;color:#4d525c;" viewBox="6.000 2.000 15.500 19.000" fill="none" stroke="currentColor" stroke-width="1.88" stroke-linecap="round" stroke-linejoin="round" preserveAspectRatio="none" ><path d="M13 3H6v18l6-4.5l6 4.5V12"/><path d="M18 2v7M14.5 5.5h7"/></svg>
<svg class="ic" style="left:1656.62px;top:559.88px;width:7.55px;height:4.25px;color:#4d525c;" viewBox="6.000 9.000 12.000 6.000" fill="none" stroke="currentColor" stroke-width="1.95" stroke-linecap="round" stroke-linejoin="round" preserveAspectRatio="none" ><path d="M6 9l6 6l6-6"/></svg>
<div class="t" style="left:1496.40px;width:300px;text-align:center;top:576.96px;font-size:10.8px;line-height:10.8px;font-weight:400;color:#3a3d44;">Add To</div>
<div class="r" style="left:1676.30px;top:542.60px;width:1.00px;height:61.10px;background:#d9d9d9"></div>
<svg class="ic" style="left:1698.24px;top:552.19px;width:16.12px;height:13.62px;color:#4d525c;" viewBox="2.500 3.000 17.500 18.000" fill="none" stroke="currentColor" stroke-width="1.88" stroke-linecap="round" stroke-linejoin="round" preserveAspectRatio="none" ><rect x="2.5" y="7" width="15" height="9" rx="1"/><path d="M6 10h8M6 13h8"/><path d="M17 3h3v18h-3M18.5 12h0"/></svg>
<svg class="ic" style="left:1718.52px;top:559.88px;width:7.55px;height:4.25px;color:#4d525c;" viewBox="6.000 9.000 12.000 6.000" fill="none" stroke="currentColor" stroke-width="1.95" stroke-linecap="round" stroke-linejoin="round" preserveAspectRatio="none" ><path d="M6 9l6 6l6-6"/></svg>
<div class="t" style="left:1558.30px;width:300px;text-align:center;top:576.96px;font-size:10.8px;line-height:10.8px;font-weight:400;color:#3a3d44;">Print &amp;</div>
<div class="t" style="left:1558.30px;width:300px;text-align:center;top:589.06px;font-size:10.8px;line-height:10.8px;font-weight:400;color:#3a3d44;">Export</div>
<div class="r" style="left:1739.50px;top:542.60px;width:1.00px;height:61.10px;background:#d9d9d9"></div>
<svg class="ic" style="left:1756.97px;top:569.18px;width:5.25px;height:9.65px;color:#111;" viewBox="9.000 4.000 8.000 16.000" fill="none" stroke="currentColor" stroke-width="1.95" stroke-linecap="round" stroke-linejoin="round" preserveAspectRatio="none" ><path d="M9 4l8 8l-8 8"/></svg>
<svg class="ic" style="left:1785.29px;top:550.69px;width:13.62px;height:13.62px;color:#333;" viewBox="2.500 2.500 19.000 19.000" fill="none" stroke="currentColor" stroke-width="1.88" stroke-linecap="round" stroke-linejoin="round" preserveAspectRatio="none" ><circle cx="12" cy="12" r="9.5"/><path d="M12 7v10M7 12h10"/></svg>
<div class="t" style="left:1642.10px;width:300px;text-align:center;top:575.46px;font-size:10.8px;line-height:10.8px;font-weight:400;color:#3a3d44;">Quick</div>
<div class="t" style="left:1642.10px;width:300px;text-align:center;top:587.26px;font-size:10.8px;line-height:10.8px;font-weight:400;color:#3a3d44;">Create</div>
<svg class="ic" style="left:1832.49px;top:550.69px;width:13.62px;height:13.62px;color:#333;" viewBox="5.000 3.000 14.000 18.000" fill="none" stroke="currentColor" stroke-width="1.88" stroke-linecap="round" stroke-linejoin="round" preserveAspectRatio="none" ><path d="M12 15V3M7.5 7.5L12 3l4.5 4.5"/><path d="M5 11v10h14V11"/></svg>
<div class="t" style="left:1689.30px;width:300px;text-align:center;top:575.46px;font-size:10.8px;line-height:10.8px;font-weight:400;color:#3a3d44;">Share</div>
<div class="t" style="left:1689.30px;width:300px;text-align:center;top:587.26px;font-size:10.8px;line-height:10.8px;font-weight:400;color:#3a3d44;">Widget</div>
<svg class="ic" style="left:1874.19px;top:550.69px;width:13.62px;height:13.62px;color:#333;" viewBox="3.000 3.000 18.000 18.000" fill="none" stroke="currentColor" stroke-width="1.88" stroke-linecap="round" stroke-linejoin="round" preserveAspectRatio="none" ><rect x="3" y="3" width="18" height="18" rx="2"/><path d="M9 3v18M15 3v18"/></svg>
<div class="t" style="left:1731.00px;width:300px;text-align:center;top:575.46px;font-size:10.8px;line-height:10.8px;font-weight:400;color:#3a3d44;">Views</div>
<div class="r" style="left:982.00px;top:607.50px;width:926.00px;height:1.00px;background:#ececec"></div>
<div class="r" style="left:982.00px;top:608.00px;width:884.50px;height:68.50px;background:#f2f2f2"></div>
<div class="clip" style="left:999px;top:632.70px;width:34.5px;height:23.5px;border-radius:2px"><svg style="position:absolute;left:0;top:0;width:34.5px;height:23.5px" viewBox="0 0 34 23.5" preserveAspectRatio="none"><rect width="34" height="23.5" fill="#eef0f4"/><polygon points="0,2 18,6 28,14 24,18 8,14 0,10" fill="#e2b8a8"/>
<polygon points="4,20 28,4 31,6 6,22" fill="#e4dcc4"/><path d="M9 18l1-1M14 15l1-1M19 12l1-1" stroke="#555" stroke-width="1.2"/></svg></div>
<svg class="ic" style="left:1045.80px;top:637.30px;width:13.90px;height:15.00px;color:#3b58a3;" viewBox="2.000 2.000 20.000 20.000" fill="none" stroke="currentColor" stroke-width="1.80" stroke-linecap="round" stroke-linejoin="round" preserveAspectRatio="none" ><path d="M3.67 6.08L8.25 9.96M2 12.29H8.25M3.67 18.12L8.25 14.62M9.08 3.36V20.83M12.83 2V22L22 16.56V6.85L12.83 2M12.83 10.35L22 6.85"/></svg>
<div class="t" style="left:1069.00px;top:635.36px;font-size:16.7px;line-height:16.7px;font-weight:400;color:#3b58a3;">Reduced durability and potential failure during test flights (A)</div>
<svg class="ic" style="left:1810.97px;top:641.68px;width:10.05px;height:4.55px;color:#555;" viewBox="5.000 8.000 14.000 7.000" fill="none" stroke="currentColor" stroke-width="1.95" stroke-linecap="round" stroke-linejoin="round" preserveAspectRatio="none" ><path d="M5 15l7-7l7 7"/></svg>
<div class="r" style="left:1866.00px;top:608.00px;width:1.00px;height:304.50px;background:#e8e8e8"></div>
<div class="r" style="left:1872.00px;top:620.90px;width:29.00px;height:29.00px;border:1.3px solid #8a63d3;border-radius:4px"></div>
<svg class="ic" style="left:1878.21px;top:627.06px;width:16.57px;height:16.67px;color:#8a63d3;" viewBox="2.500 2.500 19.000 19.000" fill="none" stroke="currentColor" stroke-width="1.12" stroke-linecap="round" stroke-linejoin="round" preserveAspectRatio="none" ><circle cx="12" cy="12" r="9.5"/><path d="M12 11v6"/><circle cx="12" cy="7.5" r="0.8" fill="currentColor"/></svg>
<div class="r" style="left:1872.00px;top:663.60px;width:29.00px;height:29.00px;border:1.3px solid #3a62c6;border-radius:4px"></div>
<svg class="ic" style="left:1877.64px;top:669.24px;width:17.73px;height:17.73px;color:#3a62c6;" viewBox="3.000 3.500 16.770 17.000" fill="none" stroke="currentColor" stroke-width="1.27" stroke-linecap="round" stroke-linejoin="round" preserveAspectRatio="none" ><path d="M6 6.5a8.5 8.5 0 0 1 12.5 0M19.5 10.5a8.5 8.5 0 0 1-4 9.5M8.5 20a8.5 8.5 0 0 1-4-9.5"/><path d="M16 4.5l2.5 2l.5-3M17 20.5l-2-1.5l2-2M3 12.5l1.5-2.5l2.5 1.5"/></svg>
<div class="r" style="left:1872.00px;top:706.30px;width:29.00px;height:29.00px;border:1.3px solid #1e9a4b;border-radius:4px"></div>
<svg class="ic" style="left:1878.12px;top:717.42px;width:16.75px;height:6.75px;color:#1e9a4b;" viewBox="3.000 8.000 18.000 8.000" fill="none" stroke="currentColor" stroke-width="2.25" stroke-linecap="round" stroke-linejoin="round" preserveAspectRatio="none" ><path d="M9 8H7a4 4 0 0 0 0 8h2M15 8h2a4 4 0 0 1 0 8h-2M8 12h8"/></svg>
<div class="r" style="left:1872.00px;top:749.00px;width:29.00px;height:29.00px;border:1.3px solid #60656c;border-radius:4px"></div>
<svg class="ic" style="left:1879.60px;top:756.45px;width:13.80px;height:14.10px;color:#60656c;" viewBox="4.000 3.000 16.000 16.914" fill="none" stroke="currentColor" stroke-width="1.20" stroke-linecap="round" stroke-linejoin="round" preserveAspectRatio="none" ><path d="M4 12a8 8 0 1 0 2.3-5.7"/><path d="M4 3v4h4M12 8v4l3 2"/></svg>
<div class="r" style="left:1872.00px;top:791.70px;width:29.00px;height:29.00px;border:1.3px solid #1d8c7c;border-radius:4px"></div>
<svg class="ic" style="left:1877.67px;top:798.73px;width:17.65px;height:14.95px;color:#1d8c7c;" viewBox="2.000 3.300 20.000 17.700" fill="none" stroke="currentColor" stroke-width="1.35" stroke-linecap="round" stroke-linejoin="round" preserveAspectRatio="none" ><circle cx="12" cy="11" r="3"/><path d="M7 21v-1.5a3.5 3.5 0 0 1 3.5-3.5h3a3.5 3.5 0 0 1 3.5 3.5V21zM7 21h10"/><circle cx="5.5" cy="5.5" r="2.2"/><circle cx="18.5" cy="5.5" r="2.2"/><path d="M2 13v-1a3 3 0 0 1 3-3h1.5M22 13v-1a3 3 0 0 0-3-3h-1.5"/></svg>
<div class="r" style="left:1872.00px;top:834.40px;width:29.00px;height:29.00px;border:1.3px solid #d9793a;border-radius:4px"></div>
<svg class="ic" style="left:1879.56px;top:841.96px;width:13.88px;height:13.88px;color:#d9793a;" viewBox="3.000 3.000 18.000 18.000" fill="none" stroke="currentColor" stroke-width="1.12" stroke-linecap="round" stroke-linejoin="round" preserveAspectRatio="none" ><rect x="3" y="3" width="18" height="18" rx="1.5"/><path d="M3 7h18" stroke-width="2.5"/><path d="M7 14s2-3 5-3s5 3 5 3s-2 3-5 3s-5-3-5-3z"/><circle cx="12" cy="14" r="0.8" fill="currentColor"/></svg>
<div class="r" style="left:1862.00px;top:677.50px;width:4.00px;height:93.50px;background:#e4e4e4"></div>
<div class="r" style="left:1847.70px;top:725.80px;width:18.30px;height:36.20px;background:#9da1a9;border-radius:5px 0 0 5px"></div>
<svg class="ic" style="left:1854.33px;top:738.83px;width:4.85px;height:10.35px;color:#fff;" viewBox="8.000 5.000 7.000 14.000" fill="none" stroke="currentColor" stroke-width="1.65" stroke-linecap="round" stroke-linejoin="round" preserveAspectRatio="none" ><path d="M15 5l-7 7l7 7"/></svg>
<div class="clip" style="left:982px;top:676.5px;width:880px;height:236.00px">
<div class="t" style="left:15.00px;top:29.22px;font-size:13.8px;line-height:13.8px;font-weight:700;color:#111;">Description</div>
<div class="clip" style="left:163px;top:20.20px;width:261px;height:28px">
<div class="t" style="left:0;top:6.08px;font-size:15.5px;line-height:15.5px;color:#1e1e1e">Reduced durability and potential failure during test flights</div>
</div>
<div class="t" style="left:15.00px;top:69.82px;font-size:13.8px;line-height:13.8px;font-weight:700;color:#111;">Workspace</div>
<div class="clip" style="left:163px;top:60.80px;width:261px;height:28px">
<div class="t" style="left:0;top:6.08px;font-size:15.5px;line-height:15.5px;color:#1e1e1e">Default</div>
</div>
<div class="t" style="left:15.00px;top:110.42px;font-size:13.8px;line-height:13.8px;font-weight:700;color:#111;">Impact Severity</div>
<div class="clip" style="left:163px;top:101.40px;width:261px;height:28px">
<div class="r" style="left:0;top:3.70px;width:75px;height:20.6px;background:#fde8b2;border-radius:4px"></div><div class="r" style="left:3.6px;top:6.30px;width:12.4px;height:12.2px;border-radius:50%;border:1.5px solid #111;background:linear-gradient(90deg,#111 50%,transparent 50%)"></div><div class="t" style="left:18.5px;top:6.33px;font-size:15.2px;line-height:15.2px;color:#111">Medium</div>
</div>
<div class="t" style="left:15.00px;top:151.02px;font-size:13.8px;line-height:13.8px;font-weight:700;color:#111;">Instructions</div>
<div class="clip" style="left:163px;top:142.00px;width:261px;height:28px">
<div class="t" style="left:0;top:6.08px;font-size:15.5px;line-height:15.5px;color:#1e1e1e">Refer to the risk assessment document for details</div>
</div>
<div class="t" style="left:15.00px;top:191.62px;font-size:13.8px;line-height:13.8px;font-weight:700;color:#111;">Estimated Duration</div>
<div class="clip" style="left:163px;top:182.60px;width:261px;height:28px">
<div class="t" style="left:0;top:6.08px;font-size:15.5px;line-height:15.5px;color:#1e1e1e">20</div>
</div>
<div class="t" style="left:15.00px;top:232.22px;font-size:13.8px;line-height:13.8px;font-weight:700;color:#111;">Actual Start Date</div>
<div class="clip" style="left:163px;top:223.20px;width:261px;height:28px">
<div class="t" style="left:0;top:6.08px;font-size:15.5px;line-height:15.5px;color:#1e1e1e">01/04/2026 05:54 PM</div>
</div>
<div class="t" style="left:434.70px;top:29.22px;font-size:13.8px;line-height:13.8px;font-weight:700;color:#111;">Latest Revision</div>
<div class="clip" style="left:583px;top:20.20px;width:261px;height:28px">
<div class="r" style="left:0;top:4.20px;width:19.7px;height:19.7px;border:1px solid #d8d8d8;border-radius:2px;background:#fff"></div><svg class="ic" style="left:3.6px;top:9.40px;width:12.5px;height:9px;color:#2a6ab5" viewBox="4 6.5 16 11" fill="none" stroke="currentColor" stroke-width="2.1" stroke-linecap="round" stroke-linejoin="round" preserveAspectRatio="none"><path d="M4 12.5l5 5L20 6.5"/></svg>
</div>
<div class="t" style="left:434.70px;top:69.82px;font-size:13.8px;line-height:13.8px;font-weight:700;color:#111;">Impact Type</div>
<div class="clip" style="left:583px;top:60.80px;width:261px;height:28px">
<div class="r" style="left:0;top:3.70px;width:98.5px;height:20.6px;background:#b9cdf5;border-radius:4px"></div><svg class="ic" style="left:3.7px;top:5.70px;width:12.5px;height:12.8px" viewBox="0 0 12.5 12.8"><circle cx="2.3" cy="2.6" r="1.6" fill="none" stroke="#111" stroke-width="1.2"/><g transform="translate(2.8 2.7)"><rect x="4.1" y="-0.2" width="2.4" height="3" rx="0.4" transform="rotate(0 5.3 5.3)" fill="#111"/><rect x="4.1" y="-0.2" width="2.4" height="3" rx="0.4" transform="rotate(60 5.3 5.3)" fill="#111"/><rect x="4.1" y="-0.2" width="2.4" height="3" rx="0.4" transform="rotate(120 5.3 5.3)" fill="#111"/><rect x="4.1" y="-0.2" width="2.4" height="3" rx="0.4" transform="rotate(180 5.3 5.3)" fill="#111"/><rect x="4.1" y="-0.2" width="2.4" height="3" rx="0.4" transform="rotate(240 5.3 5.3)" fill="#111"/><rect x="4.1" y="-0.2" width="2.4" height="3" rx="0.4" transform="rotate(300 5.3 5.3)" fill="#111"/><circle cx="5.3" cy="5.3" r="3.4" fill="#111"/><circle cx="5.3" cy="5.3" r="1.1" fill="#b9cdf5"/></g></svg><div class="t" style="left:18.5px;top:6.33px;font-size:15.2px;line-height:15.2px;color:#111">Operational</div>
</div>
<div class="t" style="left:434.70px;top:110.42px;font-size:13.8px;line-height:13.8px;font-weight:700;color:#111;">Comments</div>
<div class="clip" style="left:583px;top:101.40px;width:261px;height:28px">
<div class="t" style="left:0;top:6.08px;font-size:15.5px;line-height:15.5px;color:#1e1e1e">[plm.tester3 | 2025-09-24 12:24 | MODIFIED]</div>
</div>
<div class="t" style="left:434.70px;top:151.02px;font-size:13.8px;line-height:13.8px;font-weight:700;color:#111;">Actual Duration</div>
<div class="clip" style="left:583px;top:142.00px;width:261px;height:28px">
<div class="t" style="left:0;top:6.08px;font-size:15.5px;line-height:15.5px;color:#1e1e1e">2</div>
</div>
<div class="t" style="left:434.70px;top:191.62px;font-size:13.8px;line-height:13.8px;font-weight:700;color:#111;">Actual End Date</div>
<div class="clip" style="left:583px;top:182.60px;width:261px;height:28px">
<div class="t" style="left:0;top:6.08px;font-size:15.5px;line-height:15.5px;color:#1e1e1e">30/04/2026 05:53 PM</div>
</div>
<div class="t" style="left:434.70px;top:232.22px;font-size:13.8px;line-height:13.8px;font-weight:700;color:#111;">Needs Review</div>
<div class="clip" style="left:583px;top:223.20px;width:261px;height:28px">
<div class="r" style="left:0;top:4.20px;width:19.7px;height:19.7px;border:1px solid #d8d8d8;border-radius:2px;background:#fff"></div><svg class="ic" style="left:3.6px;top:9.40px;width:12.5px;height:9px;color:#2a6ab5" viewBox="4 6.5 16 11" fill="none" stroke="currentColor" stroke-width="2.1" stroke-linecap="round" stroke-linejoin="round" preserveAspectRatio="none"><path d="M4 12.5l5 5L20 6.5"/></svg>
</div>
</div>
<div class="r" style="left:1427.00px;top:901.50px;width:36.00px;height:11.00px;background:#9da1a9;border-radius:5px 5px 0 0"></div>
<div class="r" style="left:1911.00px;top:95.00px;width:5.00px;height:818.00px;background:#8d8d8d;border-radius:2px"></div>
<div class="r" style="left:0.00px;top:916.00px;width:1917.00px;height:1.00px;background:#b0b0b0"></div>
</body></html>
